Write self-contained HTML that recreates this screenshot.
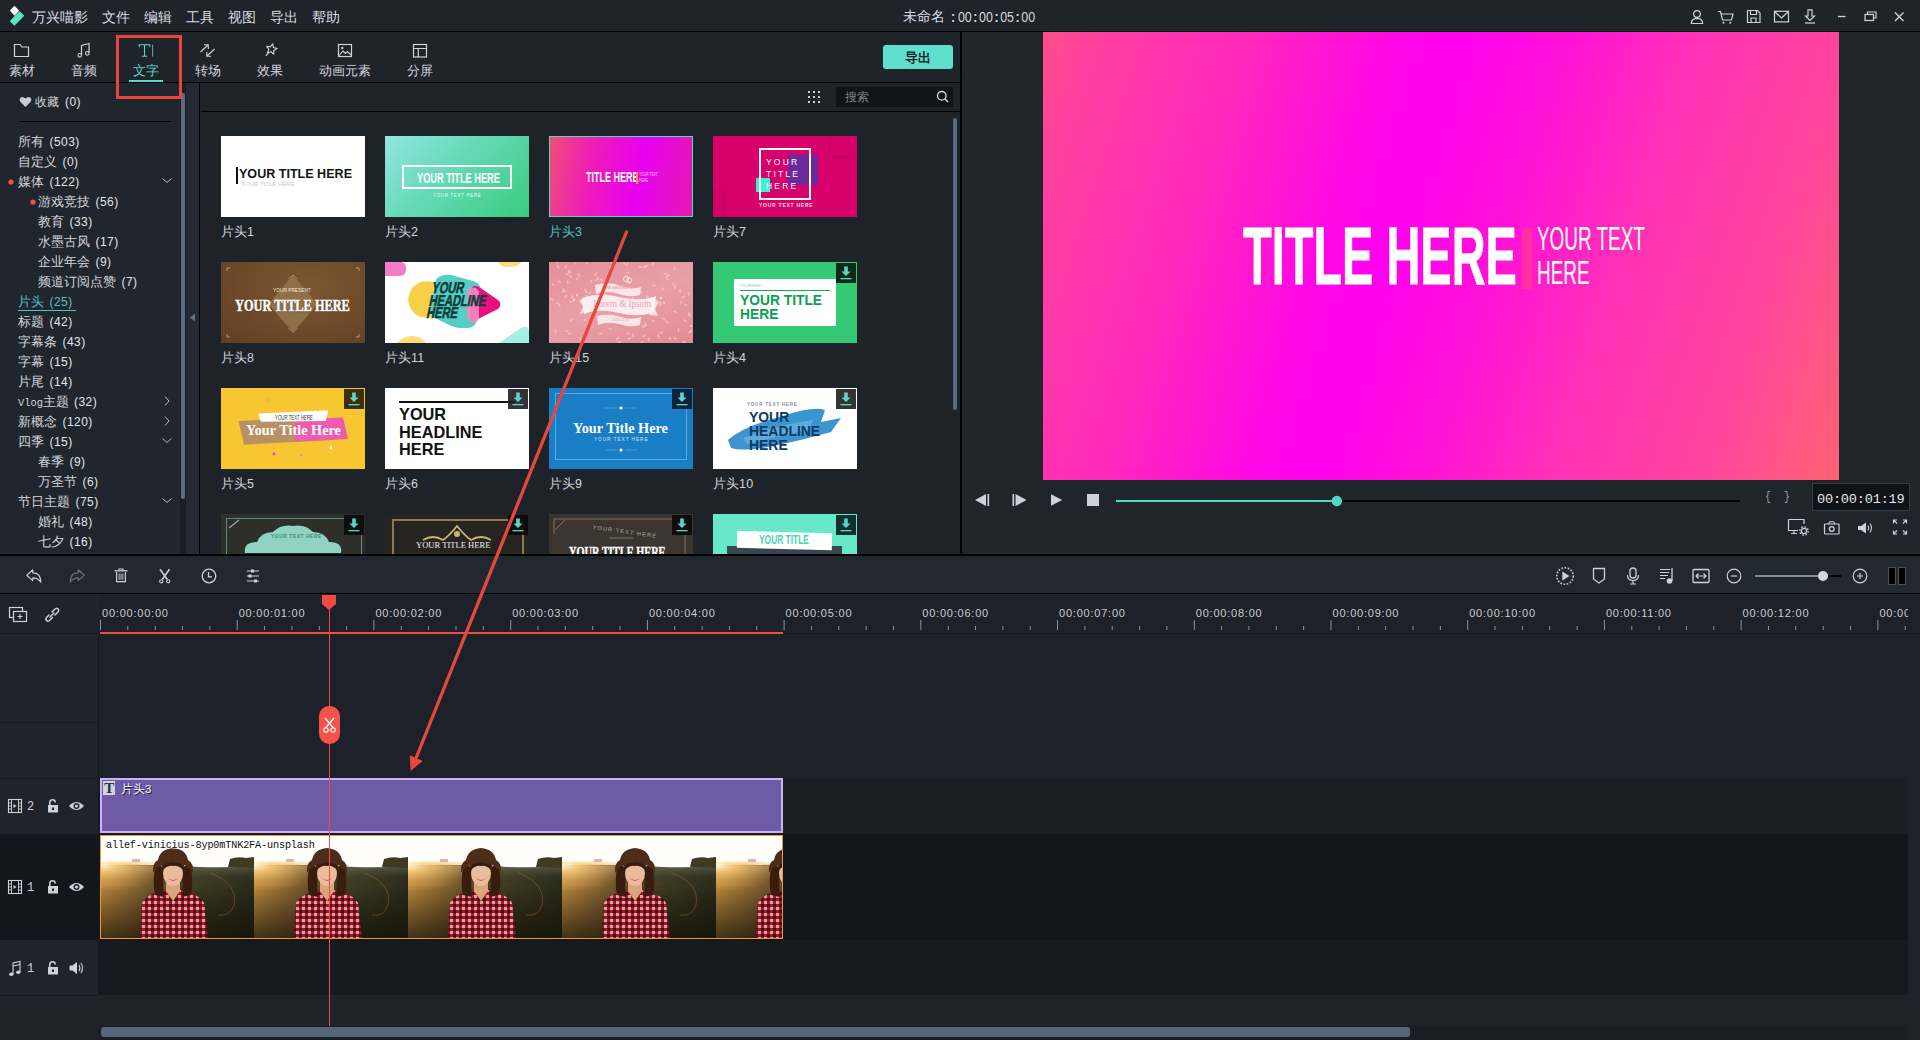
<!DOCTYPE html><html><head><meta charset="utf-8"><style>
*{margin:0;padding:0;box-sizing:border-box}
html,body{width:1920px;height:1040px;overflow:hidden;background:#1f232a;font-family:"Liberation Sans",sans-serif;color:#d4d8de}
.a{position:absolute}
.t{position:absolute;white-space:nowrap;line-height:1}
svg{position:absolute;overflow:visible}
.m{font-family:"Liberation Mono",monospace}
</style></head><body>
<div class="a" style="left:0px;top:0px;width:1920px;height:31px;background:#1f232a;"></div>
<div class="a" style="left:0px;top:31px;width:1920px;height:1px;background:#000;"></div>
<div class="a" style="left:0px;top:32px;width:961px;height:50px;background:#1f232a;"></div>
<div class="a" style="left:0px;top:82px;width:961px;height:1px;background:#000;"></div>
<div class="a" style="left:0px;top:83px;width:199px;height:471px;background:#20262d;"></div>
<div class="a" style="left:186px;top:83px;width:13px;height:471px;background:#232a33;"></div>
<div class="a" style="left:180px;top:83px;width:6px;height:471px;background:#1a1e23;"></div>
<div class="a" style="left:181px;top:93px;width:4px;height:406px;background:#5b6b82;border-radius:2px"></div>
<div class="a" style="left:199px;top:83px;width:1px;height:471px;background:#000;"></div>
<div class="a" style="left:200px;top:83px;width:761px;height:471px;background:#1e232a;"></div>
<div class="a" style="left:201px;top:111px;width:760px;height:1px;background:#000;"></div>
<div class="a" style="left:960px;top:32px;width:2px;height:522px;background:#000;"></div>
<div class="a" style="left:963px;top:32px;width:957px;height:522px;background:#20252c;"></div>
<div class="a" style="left:0px;top:554px;width:1920px;height:2px;background:#000;"></div>
<div class="a" style="left:0px;top:556px;width:1920px;height:37px;background:#222830;"></div>
<div class="a" style="left:0px;top:594px;width:1920px;height:446px;background:#1d2129;"></div>
<svg style="left:0px;top:0px;" width="40" height="31" viewBox="0 0 40 31"><path d="M14.5 5.8 L19.2 10.8 L14.5 15.7 L9.8 10.5Z" fill="#fff"/><path d="M19.7 11.3 L24.3 15.8 L14.5 25.8 L9.8 21.2 L14.5 15.9Z" fill="#55e5c2"/></svg>
<div class="t" style="left:32px;top:10px;font-size:14px;color:#d8dce2;">万兴喵影</div>
<div class="t" style="left:102px;top:10px;font-size:14px;color:#d8dce2;">文件</div>
<div class="t" style="left:144px;top:10px;font-size:14px;color:#d8dce2;">编辑</div>
<div class="t" style="left:186px;top:10px;font-size:14px;color:#d8dce2;">工具</div>
<div class="t" style="left:228px;top:10px;font-size:14px;color:#d8dce2;">视图</div>
<div class="t" style="left:270px;top:10px;font-size:14px;color:#d8dce2;">导出</div>
<div class="t" style="left:312px;top:10px;font-size:14px;color:#d8dce2;">帮助</div>
<div class="t" style="left:903px;top:10px;font-size:13.5px;color:#d8dce2;">未命名</div>
<div class="t" style="left:951px;top:9px;font-size:15.5px;color:#d4d8de;transform:scaleX(0.8);transform-origin:0 0"><span style="font-weight:bold;margin-right:3.5px">:</span>00<span style="margin:0 2px;font-weight:bold">:</span>00<span style="margin:0 2px;font-weight:bold">:</span>05<span style="margin:0 2px;font-weight:bold">:</span>00</div>
<svg style="left:1688px;top:8px;" width="18" height="18" viewBox="0 0 18 18"><circle cx="9" cy="6" r="3.3" fill="none" stroke="#d0d4da" stroke-width="1.2"/><path d="M3.3 15.5 Q3.5 10.5 9 10.3 Q14.5 10.5 14.7 15.5Z" fill="none" stroke="#d0d4da" stroke-width="1.2"/></svg>
<svg style="left:1716px;top:8px;" width="20" height="18" viewBox="0 0 20 18"><path d="M2 3.5 L4.5 3.5 L6.5 12 L15.5 12 L17 6 L5.3 6" fill="none" stroke="#d0d4da" stroke-width="1.2"/><circle cx="7.5" cy="14.8" r="1" fill="#d0d4da"/><circle cx="14.3" cy="14.8" r="1" fill="#d0d4da"/></svg>
<svg style="left:1745px;top:8px;" width="18" height="18" viewBox="0 0 18 18"><path d="M2.5 2.5 H12.5 L15 5 V14.5 H2.5Z" fill="none" stroke="#d0d4da" stroke-width="1.2"/><path d="M5.5 2.5 V6.5 H11.5 V2.5 M6 14.5 V10 H11 V14.5" fill="none" stroke="#d0d4da" stroke-width="1.2"/></svg>
<svg style="left:1772px;top:8px;" width="20" height="18" viewBox="0 0 20 18"><rect x="2.5" y="3.3" width="14" height="10.6" fill="none" stroke="#d0d4da" stroke-width="1.2"/><path d="M2.5 3.5 L9.5 10 L16.5 3.5" fill="none" stroke="#d0d4da" stroke-width="1.2"/></svg>
<svg style="left:1801px;top:8px;" width="18" height="18" viewBox="0 0 18 18"><path d="M7 1.8 H11 V8 H13.5 L9 12.5 L4.5 8 H7Z" fill="none" stroke="#d0d4da" stroke-width="1.2"/><path d="M4 15 H14" stroke="#d0d4da" stroke-width="1.2"/></svg>
<svg style="left:1836px;top:8px;" width="14" height="18" viewBox="0 0 14 18"><path d="M2 8.5 H9.5" stroke="#d0d4da" stroke-width="1.3"/></svg>
<svg style="left:1863px;top:8px;" width="16" height="18" viewBox="0 0 16 18"><rect x="2" y="6.5" width="8.5" height="6" fill="none" stroke="#d0d4da" stroke-width="1.2"/><path d="M4.5 6.5 V4 H13 V10 H10.5" fill="none" stroke="#d0d4da" stroke-width="1.2"/></svg>
<svg style="left:1892px;top:8px;" width="16" height="18" viewBox="0 0 16 18"><path d="M3 4.5 L11.5 13 M11.5 4.5 L3 13" stroke="#d0d4da" stroke-width="1.4"/></svg>
<div class="t" style="left:-38px;top:64px;width:120px;text-align:center;font-size:13px;color:#d0d4da">素材</div>
<div class="t" style="left:24px;top:64px;width:120px;text-align:center;font-size:13px;color:#d0d4da">音频</div>
<div class="t" style="left:86px;top:64px;width:120px;text-align:center;font-size:13px;color:#5ad8c8">文字</div>
<div class="t" style="left:148px;top:64px;width:120px;text-align:center;font-size:13px;color:#d0d4da">转场</div>
<div class="t" style="left:210px;top:64px;width:120px;text-align:center;font-size:13px;color:#d0d4da">效果</div>
<div class="t" style="left:285px;top:64px;width:120px;text-align:center;font-size:13px;color:#d0d4da">动画元素</div>
<div class="t" style="left:360px;top:64px;width:120px;text-align:center;font-size:13px;color:#d0d4da">分屏</div>
<svg style="left:12px;top:42px;" width="20" height="18" viewBox="0 0 20 18"><path d="M2.5 2.5 H8 L10 5 H16.5 V14.5 H2.5Z" fill="none" stroke="#d0d4da" stroke-width="1.2"/></svg>
<svg style="left:74px;top:42px;" width="20" height="18" viewBox="0 0 20 18"><path d="M7.5 13 V3.5 L15 1.5 V11" fill="none" stroke="#d0d4da" stroke-width="1.2"/><circle cx="5.8" cy="13.3" r="1.8" fill="none" stroke="#d0d4da" stroke-width="1.1"/><circle cx="13.3" cy="11.3" r="1.8" fill="none" stroke="#d0d4da" stroke-width="1.1"/></svg>
<svg style="left:136px;top:42px;" width="22" height="18" viewBox="0 0 22 18"><path d="M3.2 5 V2.8 H13.8 V5 M8.5 2.8 V14.3 M5.8 14.3 H11.2" fill="none" stroke="#5ad8c8" stroke-width="1.1"/><path d="M16.6 2.5 V14.5" stroke="#5ad8c8" stroke-width="0.8"/></svg>
<svg style="left:198px;top:43px;" width="22" height="18" viewBox="0 0 22 18"><path d="M2.5 9 L10 2 M6 1.8 H10.3 V6" fill="none" stroke="#d0d4da" stroke-width="1.1"/><path d="M16.5 6 L9 13 M13 13.3 H8.8 V9" fill="none" stroke="#d0d4da" stroke-width="1.1"/></svg>
<svg style="left:261px;top:42px;" width="20" height="18" viewBox="0 0 20 18"><path d="M10.50 1.60 L12.03 5.10 L15.83 5.47 L12.97 8.00 L13.79 11.73 L10.50 9.80 L7.21 11.73 L8.03 8.00 L5.17 5.47 L8.97 5.10Z" fill="none" stroke="#d0d4da" stroke-width="1.1" stroke-linejoin="round" transform="rotate(12 10.5 7.2)"/><path d="M7.6 10.8 L4.8 13.8" stroke="#d0d4da" stroke-width="1.2"/></svg>
<svg style="left:336px;top:42px;" width="20" height="18" viewBox="0 0 20 18"><rect x="2.5" y="2.5" width="13" height="12" fill="none" stroke="#d0d4da" stroke-width="1.2"/><path d="M3 13.5 L7 9 L9.5 11.5 L11.5 9.5 L15 13" fill="none" stroke="#d0d4da" stroke-width="1.1"/><circle cx="6.3" cy="6" r="1.2" fill="#d0d4da"/></svg>
<svg style="left:411px;top:42px;" width="20" height="18" viewBox="0 0 20 18"><rect x="2.5" y="2.5" width="13" height="12.5" fill="none" stroke="#d0d4da" stroke-width="1.2"/><path d="M2.5 6.5 H15.5 M7.3 6.5 V15" stroke="#d0d4da" stroke-width="1.2"/></svg>
<div class="a" style="left:116px;top:35px;width:66px;height:64px;background:transparent;border:3px solid #e9453c"></div>
<div class="a" style="left:129px;top:80px;width:34px;height:2px;background:#5ad8c8;"></div>
<div class="a" style="left:883px;top:45px;width:70px;height:24px;background:#5fe0cf;border-radius:3px"></div>
<div class="t" style="left:883px;top:51px;width:70px;text-align:center;font-size:13px;font-weight:bold;color:#1b2028">导出</div>
<svg style="left:19px;top:96px;" width="14" height="12" viewBox="0 0 14 12"><path d="M6.5 11 L1.3 5.8 Q-0.2 3.8 1.3 2 Q3.6 -0.2 6.5 2.6 Q9.4 -0.2 11.7 2 Q13.2 3.8 11.7 5.8Z" fill="#c8ccd3"/></svg>
<div class="t" style="left:35px;top:96px;font-size:12px;color:#d2d6dc">收藏<span style="font-family:'Liberation Sans',sans-serif;font-size:12px;letter-spacing:0.45px;margin-left:6px;color:#e2e5e8">(0)</span></div>
<div class="a" style="left:20px;top:121px;width:151px;height:1px;background:#000;"></div>
<div class="t" style="left:18px;top:136px;font-size:12.5px;color:#d2d6dc">所有<span style="font-family:'Liberation Sans',sans-serif;font-size:12px;letter-spacing:0.45px;margin-left:5.5px;color:#e2e5e8">(503)</span></div>
<div class="t" style="left:18px;top:156px;font-size:12.5px;color:#d2d6dc">自定义<span style="font-family:'Liberation Sans',sans-serif;font-size:12px;letter-spacing:0.45px;margin-left:5.5px;color:#e2e5e8">(0)</span></div>
<div class="t" style="left:18px;top:176px;font-size:12.5px;color:#d2d6dc">媒体<span style="font-family:'Liberation Sans',sans-serif;font-size:12px;letter-spacing:0.45px;margin-left:5.5px;color:#e2e5e8">(122)</span></div>
<div class="t" style="left:38px;top:196px;font-size:12.5px;color:#d2d6dc">游戏竞技<span style="font-family:'Liberation Sans',sans-serif;font-size:12px;letter-spacing:0.45px;margin-left:5.5px;color:#e2e5e8">(56)</span></div>
<div class="t" style="left:38px;top:216px;font-size:12.5px;color:#d2d6dc">教育<span style="font-family:'Liberation Sans',sans-serif;font-size:12px;letter-spacing:0.45px;margin-left:5.5px;color:#e2e5e8">(33)</span></div>
<div class="t" style="left:38px;top:236px;font-size:12.5px;color:#d2d6dc">水墨古风<span style="font-family:'Liberation Sans',sans-serif;font-size:12px;letter-spacing:0.45px;margin-left:5.5px;color:#e2e5e8">(17)</span></div>
<div class="t" style="left:38px;top:256px;font-size:12.5px;color:#d2d6dc">企业年会<span style="font-family:'Liberation Sans',sans-serif;font-size:12px;letter-spacing:0.45px;margin-left:5.5px;color:#e2e5e8">(9)</span></div>
<div class="t" style="left:38px;top:276px;font-size:12.5px;color:#d2d6dc">频道订阅点赞<span style="font-family:'Liberation Sans',sans-serif;font-size:12px;letter-spacing:0.45px;margin-left:5.5px;color:#e2e5e8">(7)</span></div>
<div class="t" style="left:18px;top:296px;font-size:12.5px;color:#4fc3c0">片头<span style="font-family:'Liberation Sans',sans-serif;font-size:12px;letter-spacing:0.45px;margin-left:5.5px;color:#4fc3c0">(25)</span></div>
<div class="t" style="left:18px;top:316px;font-size:12.5px;color:#d2d6dc">标题<span style="font-family:'Liberation Sans',sans-serif;font-size:12px;letter-spacing:0.45px;margin-left:5.5px;color:#e2e5e8">(42)</span></div>
<div class="t" style="left:18px;top:336px;font-size:12.5px;color:#d2d6dc">字幕条<span style="font-family:'Liberation Sans',sans-serif;font-size:12px;letter-spacing:0.45px;margin-left:5.5px;color:#e2e5e8">(43)</span></div>
<div class="t" style="left:18px;top:356px;font-size:12.5px;color:#d2d6dc">字幕<span style="font-family:'Liberation Sans',sans-serif;font-size:12px;letter-spacing:0.45px;margin-left:5.5px;color:#e2e5e8">(15)</span></div>
<div class="t" style="left:18px;top:376px;font-size:12.5px;color:#d2d6dc">片尾<span style="font-family:'Liberation Sans',sans-serif;font-size:12px;letter-spacing:0.45px;margin-left:5.5px;color:#e2e5e8">(14)</span></div>
<div class="t" style="left:18px;top:396px;font-size:12.5px;color:#d2d6dc"><span class="m" style="font-size:10.4px;">Vlog</span>主题<span style="font-family:'Liberation Sans',sans-serif;font-size:12px;letter-spacing:0.45px;margin-left:5px;color:#e2e5e8">(32)</span></div>
<div class="t" style="left:18px;top:416px;font-size:12.5px;color:#d2d6dc">新概念<span style="font-family:'Liberation Sans',sans-serif;font-size:12px;letter-spacing:0.45px;margin-left:5.5px;color:#e2e5e8">(120)</span></div>
<div class="t" style="left:18px;top:436px;font-size:12.5px;color:#d2d6dc">四季<span style="font-family:'Liberation Sans',sans-serif;font-size:12px;letter-spacing:0.45px;margin-left:5.5px;color:#e2e5e8">(15)</span></div>
<div class="t" style="left:38px;top:456px;font-size:12.5px;color:#d2d6dc">春季<span style="font-family:'Liberation Sans',sans-serif;font-size:12px;letter-spacing:0.45px;margin-left:5.5px;color:#e2e5e8">(9)</span></div>
<div class="t" style="left:38px;top:476px;font-size:12.5px;color:#d2d6dc">万圣节<span style="font-family:'Liberation Sans',sans-serif;font-size:12px;letter-spacing:0.45px;margin-left:5.5px;color:#e2e5e8">(6)</span></div>
<div class="t" style="left:18px;top:496px;font-size:12.5px;color:#d2d6dc">节日主题<span style="font-family:'Liberation Sans',sans-serif;font-size:12px;letter-spacing:0.45px;margin-left:5.5px;color:#e2e5e8">(75)</span></div>
<div class="t" style="left:38px;top:516px;font-size:12.5px;color:#d2d6dc">婚礼<span style="font-family:'Liberation Sans',sans-serif;font-size:12px;letter-spacing:0.45px;margin-left:5.5px;color:#e2e5e8">(48)</span></div>
<div class="t" style="left:38px;top:536px;font-size:12.5px;color:#d2d6dc">七夕<span style="font-family:'Liberation Sans',sans-serif;font-size:12px;letter-spacing:0.45px;margin-left:5.5px;color:#e2e5e8">(16)</span></div>
<div class="a" style="left:18px;top:310px;width:58px;height:1px;background:#4fc3c0;"></div>
<svg style="left:8px;top:179px;" width="6" height="6" viewBox="0 0 6 6"><circle cx="3" cy="3" r="2.6" fill="#f0534a"/></svg>
<svg style="left:30px;top:199px;" width="6" height="6" viewBox="0 0 6 6"><circle cx="3" cy="3" r="2.6" fill="#f0534a"/></svg>
<svg style="left:161px;top:177px;" width="12" height="8" viewBox="0 0 12 8"><path d="M1.5 1.5 L6 5.5 L10.5 1.5" fill="none" stroke="#b8bdc5" stroke-width="1"/></svg>
<svg style="left:163px;top:395px;" width="8" height="12" viewBox="0 0 8 12"><path d="M2 1.5 L6 6 L2 10.5" fill="none" stroke="#b8bdc5" stroke-width="1"/></svg>
<svg style="left:163px;top:415px;" width="8" height="12" viewBox="0 0 8 12"><path d="M2 1.5 L6 6 L2 10.5" fill="none" stroke="#b8bdc5" stroke-width="1"/></svg>
<svg style="left:161px;top:437px;" width="12" height="8" viewBox="0 0 12 8"><path d="M1.5 1.5 L6 5.5 L10.5 1.5" fill="none" stroke="#b8bdc5" stroke-width="1"/></svg>
<svg style="left:161px;top:497px;" width="12" height="8" viewBox="0 0 12 8"><path d="M1.5 1.5 L6 5.5 L10.5 1.5" fill="none" stroke="#b8bdc5" stroke-width="1"/></svg>
<svg style="left:189px;top:313px;" width="7" height="9" viewBox="0 0 7 9"><path d="M6 0.5 V8.5 L0.8 4.5Z" fill="#5f7088"/></svg>
<svg style="left:807px;top:90px;" width="14" height="14" viewBox="0 0 14 14"><rect x="1" y="1" width="2" height="2" fill="#c9ced5"/><rect x="1" y="6" width="2" height="2" fill="#c9ced5"/><rect x="1" y="11" width="2" height="2" fill="#c9ced5"/><rect x="6" y="1" width="2" height="2" fill="#c9ced5"/><rect x="6" y="6" width="2" height="2" fill="#c9ced5"/><rect x="6" y="11" width="2" height="2" fill="#c9ced5"/><rect x="11" y="1" width="2" height="2" fill="#c9ced5"/><rect x="11" y="6" width="2" height="2" fill="#c9ced5"/><rect x="11" y="11" width="2" height="2" fill="#c9ced5"/></svg>
<div class="a" style="left:836px;top:87px;width:117px;height:20px;background:#101317;"></div>
<div class="t" style="left:845px;top:91px;font-size:12px;color:#7d828a;">搜索</div>
<svg style="left:935px;top:89px;" width="16" height="16" viewBox="0 0 16 16"><circle cx="6.8" cy="6.8" r="4.3" fill="none" stroke="#d6dade" stroke-width="1.3"/><path d="M10 10 L13 13" stroke="#d6dade" stroke-width="1.5"/></svg>
<div class="a" style="left:953px;top:118px;width:4px;height:292px;background:#5a6a80;border-radius:2px"></div>
<div class="a" style="left:221px;top:136px;width:144px;height:81px;background:#fff;overflow:hidden;"><div class="a" style="left:15px;top:31px;width:2px;height:17px;background:#111"></div><div class="t" style="left:18px;top:31px;font-size:13.5px;color:#151515;font-weight:bold;font-family:'Liberation Sans',sans-serif;transform:scaleX(0.93);transform-origin:0 0;">YOUR TITLE HERE</div><div class="t" style="left:20px;top:45px;font-size:6px;color:#c8c8c8;font-weight:normal;font-family:'Liberation Sans',sans-serif;transform:scaleX(1.0);transform-origin:0 0;">YOUR TITLE HERE</div></div>
<div class="t" style="left:221px;top:225px;font-size:13px;color:#cfd3d9">片头<span style="font-family:'Liberation Sans',sans-serif;font-size:12.5px;letter-spacing:0.3px">1</span></div>
<div class="a" style="left:385px;top:136px;width:144px;height:81px;background:linear-gradient(135deg,#93e6e2 0%,#64d9b6 45%,#38cc7c 100%);overflow:hidden;"><div class="a" style="left:17px;top:29px;width:110px;height:24px;border:2px solid #fff"></div><div class="t" style="left:31.5px;top:34px;font-size:15px;color:#fff;font-weight:bold;font-family:'Liberation Sans',sans-serif;transform:scaleX(0.614);transform-origin:0 0;">YOUR TITLE HERE</div><div class="t" style="left:47.5px;top:57px;font-size:5.5px;color:#e8fff4;font-weight:normal;font-family:'Liberation Sans',sans-serif;transform:scaleX(0.78);transform-origin:0 0;letter-spacing:1px">YOUR TEXT HERE</div></div>
<div class="t" style="left:385px;top:225px;font-size:13px;color:#cfd3d9">片头<span style="font-family:'Liberation Sans',sans-serif;font-size:12.5px;letter-spacing:0.3px">2</span></div>
<div class="a" style="left:549px;top:136px;width:144px;height:81px;background:linear-gradient(100deg,#f04e78 0%,#ee1cb8 30%,#e800f0 62%,#e51ab0 100%);overflow:hidden;border:1px solid #4fd8c8"><div class="t" style="left:36px;top:33px;font-size:14.5px;color:#fff;font-weight:bold;font-family:'Liberation Sans',sans-serif;transform:scaleX(0.62);transform-origin:0 0;">TITLE HERE</div><div class="a" style="left:86px;top:35px;width:2px;height:12px;background:#f0a020"></div><div class="t" style="left:89px;top:34px;font-size:5.5px;color:#fbd0f5;font-weight:normal;font-family:'Liberation Sans',sans-serif;transform:scaleX(0.6);transform-origin:0 0;line-height:6px">YOUR TEXT<br>HERE</div></div>
<div class="t" style="left:549px;top:225px;font-size:13px;color:#4fc3c0">片头<span style="font-family:'Liberation Sans',sans-serif;font-size:12.5px;letter-spacing:0.3px">3</span></div>
<div class="a" style="left:713px;top:136px;width:144px;height:81px;background:#d8006a;overflow:hidden;"><div class="a" style="left:0;top:0;width:144px;height:81px;background:#d8006a"></div><div class="a" style="left:117px;top:0;width:27px;height:20px;background:#d4006a;box-shadow:-1px 2px 3px rgba(0,0,0,0.12)"></div><div class="a" style="left:0;top:55px;width:11px;height:26px;background:#d4006a;box-shadow:2px -1px 3px rgba(0,0,0,0.12)"></div><div class="a" style="left:75px;top:19px;width:30px;height:30px;background:#6a2a9e"></div><div class="a" style="left:43px;top:42px;width:14px;height:14px;background:#40f0d4"></div><div class="a" style="left:46px;top:12px;width:52px;height:52px;border:2px solid #fff"></div><div class="t" style="left:53px;top:20px;font-size:8.5px;color:#fff;font-weight:normal;font-family:'Liberation Sans',sans-serif;transform:scaleX(1.0);transform-origin:0 0;line-height:12px;letter-spacing:2.2px">YOUR<br>TITLE<br>HERE</div><div class="t" style="left:46px;top:67px;font-size:5px;color:#ffd8ea;font-weight:bold;font-family:'Liberation Sans',sans-serif;transform:scaleX(1.0);transform-origin:0 0;letter-spacing:0.75px">YOUR TEXT HERE</div></div>
<div class="t" style="left:713px;top:225px;font-size:13px;color:#cfd3d9">片头<span style="font-family:'Liberation Sans',sans-serif;font-size:12.5px;letter-spacing:0.3px">7</span></div>
<div class="a" style="left:221px;top:262px;width:144px;height:81px;background:radial-gradient(ellipse at 60% 30%,#7c5632 0%,#6e4a2a 55%,#5e3e22 100%);overflow:hidden;"><svg style="left:0;top:0" width="144" height="81"><path d="M72 13 L96.5 42 L72 70.5 L47.5 42Z" fill="#8f7049"/><path d="M67 17 L72 13 L77 17 M67 66 L72 70.5 L77 66" fill="none" stroke="#b09470" stroke-width="0.7"/></svg><svg style="left:0;top:0" width="144" height="81"><path d="M6 9 V6 H9 M138 9 V6 H135 M6 72 V75 H9 M138 72 V75 H135" fill="none" stroke="#b39a78" stroke-width="1"/></svg><div class="t" style="left:52px;top:25px;font-size:6px;color:#f0e6d8;font-weight:normal;font-family:'Liberation Sans',sans-serif;transform:scaleX(0.8);transform-origin:0 0;">YOUR PRESENT</div><div class="t" style="left:14px;top:36px;font-size:16px;color:#fff;font-weight:bold;font-family:'Liberation Serif',serif;transform:scaleX(0.77);transform-origin:0 0;text-shadow:0 1px 1px rgba(40,20,0,0.6);-webkit-text-stroke:0.5px #fff">YOUR TITLE HERE</div></div>
<div class="t" style="left:221px;top:351px;font-size:13px;color:#cfd3d9">片头<span style="font-family:'Liberation Sans',sans-serif;font-size:12.5px;letter-spacing:0.3px">8</span></div>
<div class="a" style="left:385px;top:262px;width:144px;height:81px;background:#fff;overflow:hidden;"><svg style="left:0;top:0" width="144" height="81"><path d="M0 0 H17 Q22 2 21 9 Q20 14 14 14 H0Z" fill="#f27cc8"/><path d="M113 0 H136 Q134 5 124 5 Q114 5 113 0Z" fill="#fbdc78"/><path d="M12 81 Q18 74 27 74 Q36 74 41 81Z" fill="#fbdc78"/><circle cx="41.6" cy="37.5" r="18.3" fill="#f8cf48"/><path d="M56 14 Q60 12 66 13 L88 19 Q95 21 96 28 L92 58 Q90 66 82 66 L76 66 Q70 66 62 62 L50 56 Q45 53 46 47 L50 20 Q52 15 56 14Z" fill="#4fcdbf" opacity="0.96"/><path d="M86 27 Q88 22 94 25 L113 38 Q118 42 113 47 L91 58 Q85 61 85 55Z" fill="#e8107c"/><path d="M85 26 Q92 24 94 30 L94 56 Q92 62 86 60 Q82 58 82 52 L82 31 Q82 26 85 26Z" fill="#f28ac2" opacity="0.9"/><path d="M114 81 L136 66 Q144 62 144 70 V81Z" fill="#a6efe4"/></svg><div class="t" style="left:45px;top:19.5px;font-size:15.5px;color:#0a3c3e;font-weight:bold;font-family:'Liberation Sans',sans-serif;transform:scaleX(0.7);transform-origin:0 0;line-height:12.7px;-webkit-text-stroke:0.6px #0a3c3e;letter-spacing:-0.1px;transform:scaleX(0.72) skewX(-16deg);transform-origin:0 45%">YOUR<br>HEADLINE<br>HERE</div></div>
<div class="t" style="left:385px;top:351px;font-size:13px;color:#cfd3d9">片头<span style="font-family:'Liberation Sans',sans-serif;font-size:12.5px;letter-spacing:0.3px">11</span></div>
<div class="a" style="left:549px;top:262px;width:144px;height:81px;background:linear-gradient(160deg,#e58e98,#e9a0a8 50%,#e48a94);overflow:hidden;"><svg style="left:0;top:0" width="144" height="81"><ellipse cx="46.6" cy="12.2" rx="2" ry="0.9" transform="rotate(117 46.6 12.2)" fill="#f8c8cc" opacity="0.75"/><ellipse cx="10.4" cy="43.4" rx="2" ry="0.9" transform="rotate(66 10.4 43.4)" fill="#f8c8cc" opacity="0.75"/><ellipse cx="8.4" cy="41.1" rx="2" ry="0.9" transform="rotate(7 8.4 41.1)" fill="#f8c8cc" opacity="0.75"/><ellipse cx="62.4" cy="5.7" rx="2" ry="0.9" transform="rotate(16 62.4 5.7)" fill="#f8c8cc" opacity="0.75"/><ellipse cx="61.1" cy="67.0" rx="2" ry="0.9" transform="rotate(22 61.1 67.0)" fill="#f8c8cc" opacity="0.75"/><ellipse cx="32.1" cy="50.8" rx="2" ry="0.9" transform="rotate(171 32.1 50.8)" fill="#f8c8cc" opacity="0.75"/><ellipse cx="83.1" cy="32.1" rx="2" ry="0.9" transform="rotate(176 83.1 32.1)" fill="#f8c8cc" opacity="0.75"/><ellipse cx="6.7" cy="69.5" rx="2" ry="0.9" transform="rotate(52 6.7 69.5)" fill="#f8c8cc" opacity="0.75"/><ellipse cx="20.8" cy="9.5" rx="2" ry="0.9" transform="rotate(56 20.8 9.5)" fill="#f8c8cc" opacity="0.75"/><ellipse cx="117.5" cy="14.6" rx="2" ry="0.9" transform="rotate(105 117.5 14.6)" fill="#f8c8cc" opacity="0.75"/><ellipse cx="92.0" cy="30.2" rx="2" ry="0.9" transform="rotate(99 92.0 30.2)" fill="#f8c8cc" opacity="0.75"/><ellipse cx="9.0" cy="4.8" rx="2" ry="0.9" transform="rotate(37 9.0 4.8)" fill="#f8c8cc" opacity="0.75"/><ellipse cx="98.0" cy="34.6" rx="2" ry="0.9" transform="rotate(57 98.0 34.6)" fill="#f8c8cc" opacity="0.75"/><ellipse cx="84.3" cy="36.7" rx="2" ry="0.9" transform="rotate(54 84.3 36.7)" fill="#f8c8cc" opacity="0.75"/><ellipse cx="114.4" cy="56.6" rx="2" ry="0.9" transform="rotate(44 114.4 56.6)" fill="#f8c8cc" opacity="0.75"/><ellipse cx="82.7" cy="42.5" rx="2" ry="0.9" transform="rotate(158 82.7 42.5)" fill="#f8c8cc" opacity="0.75"/><ellipse cx="105.0" cy="23.3" rx="2" ry="0.9" transform="rotate(176 105.0 23.3)" fill="#f8c8cc" opacity="0.75"/><ellipse cx="17.0" cy="33.9" rx="2" ry="0.9" transform="rotate(136 17.0 33.9)" fill="#f8c8cc" opacity="0.75"/><ellipse cx="21.9" cy="39.6" rx="2" ry="0.9" transform="rotate(7 21.9 39.6)" fill="#f8c8cc" opacity="0.75"/><ellipse cx="96.2" cy="61.9" rx="2" ry="0.9" transform="rotate(103 96.2 61.9)" fill="#f8c8cc" opacity="0.75"/><ellipse cx="126.1" cy="25.4" rx="2" ry="0.9" transform="rotate(125 126.1 25.4)" fill="#f8c8cc" opacity="0.75"/><ellipse cx="85.6" cy="47.0" rx="2" ry="0.9" transform="rotate(82 85.6 47.0)" fill="#f8c8cc" opacity="0.75"/><ellipse cx="121.0" cy="76.5" rx="2" ry="0.9" transform="rotate(85 121.0 76.5)" fill="#f8c8cc" opacity="0.75"/><ellipse cx="95.6" cy="4.9" rx="2" ry="0.9" transform="rotate(126 95.6 4.9)" fill="#f8c8cc" opacity="0.75"/><ellipse cx="93.2" cy="80.4" rx="2" ry="0.9" transform="rotate(148 93.2 80.4)" fill="#f8c8cc" opacity="0.75"/><ellipse cx="41.0" cy="31.2" rx="2" ry="0.9" transform="rotate(120 41.0 31.2)" fill="#f8c8cc" opacity="0.75"/><ellipse cx="3.2" cy="37.4" rx="2" ry="0.9" transform="rotate(30 3.2 37.4)" fill="#f8c8cc" opacity="0.75"/><ellipse cx="16.9" cy="4.8" rx="2" ry="0.9" transform="rotate(138 16.9 4.8)" fill="#f8c8cc" opacity="0.75"/><ellipse cx="18.6" cy="20.1" rx="2" ry="0.9" transform="rotate(70 18.6 20.1)" fill="#f8c8cc" opacity="0.75"/><ellipse cx="125.5" cy="6.5" rx="2" ry="0.9" transform="rotate(81 125.5 6.5)" fill="#f8c8cc" opacity="0.75"/><ellipse cx="79.1" cy="71.6" rx="2" ry="0.9" transform="rotate(147 79.1 71.6)" fill="#f8c8cc" opacity="0.75"/><ellipse cx="124.4" cy="22.6" rx="2" ry="0.9" transform="rotate(75 124.4 22.6)" fill="#f8c8cc" opacity="0.75"/><ellipse cx="51.7" cy="71.6" rx="2" ry="0.9" transform="rotate(172 51.7 71.6)" fill="#f8c8cc" opacity="0.75"/><ellipse cx="21.7" cy="14.3" rx="2" ry="0.9" transform="rotate(42 21.7 14.3)" fill="#f8c8cc" opacity="0.75"/><ellipse cx="33.6" cy="39.3" rx="2" ry="0.9" transform="rotate(106 33.6 39.3)" fill="#f8c8cc" opacity="0.75"/><ellipse cx="37.8" cy="0.3" rx="2" ry="0.9" transform="rotate(75 37.8 0.3)" fill="#f8c8cc" opacity="0.75"/><ellipse cx="53.2" cy="45.9" rx="2" ry="0.9" transform="rotate(172 53.2 45.9)" fill="#f8c8cc" opacity="0.75"/><ellipse cx="99.4" cy="41.8" rx="2" ry="0.9" transform="rotate(111 99.4 41.8)" fill="#f8c8cc" opacity="0.75"/><ellipse cx="97.4" cy="4.4" rx="2" ry="0.9" transform="rotate(162 97.4 4.4)" fill="#f8c8cc" opacity="0.75"/><ellipse cx="112.3" cy="70.8" rx="2" ry="0.9" transform="rotate(144 112.3 70.8)" fill="#f8c8cc" opacity="0.75"/><ellipse cx="56.5" cy="32.3" rx="2" ry="0.9" transform="rotate(19 56.5 32.3)" fill="#f8c8cc" opacity="0.75"/><ellipse cx="91.3" cy="5.0" rx="2" ry="0.9" transform="rotate(12 91.3 5.0)" fill="#f8c8cc" opacity="0.75"/><ellipse cx="30.1" cy="13.1" rx="2" ry="0.9" transform="rotate(61 30.1 13.1)" fill="#f8c8cc" opacity="0.75"/><ellipse cx="7.6" cy="0.0" rx="2" ry="0.9" transform="rotate(27 7.6 0.0)" fill="#f8c8cc" opacity="0.75"/><ellipse cx="14.6" cy="29.5" rx="2" ry="0.9" transform="rotate(5 14.6 29.5)" fill="#f8c8cc" opacity="0.75"/><ellipse cx="125.9" cy="49.7" rx="2" ry="0.9" transform="rotate(27 125.9 49.7)" fill="#f8c8cc" opacity="0.75"/><ellipse cx="36.3" cy="28.1" rx="2" ry="0.9" transform="rotate(66 36.3 28.1)" fill="#f8c8cc" opacity="0.75"/><ellipse cx="17.7" cy="68.8" rx="2" ry="0.9" transform="rotate(179 17.7 68.8)" fill="#f8c8cc" opacity="0.75"/><ellipse cx="67.1" cy="39.2" rx="2" ry="0.9" transform="rotate(15 67.1 39.2)" fill="#f8c8cc" opacity="0.75"/><ellipse cx="14.7" cy="27.8" rx="2" ry="0.9" transform="rotate(48 14.7 27.8)" fill="#f8c8cc" opacity="0.75"/><ellipse cx="119.4" cy="13.1" rx="2" ry="0.9" transform="rotate(4 119.4 13.1)" fill="#f8c8cc" opacity="0.75"/><ellipse cx="136.9" cy="42.8" rx="2" ry="0.9" transform="rotate(26 136.9 42.8)" fill="#f8c8cc" opacity="0.75"/><ellipse cx="78.2" cy="2.2" rx="2" ry="0.9" transform="rotate(95 78.2 2.2)" fill="#f8c8cc" opacity="0.75"/><ellipse cx="140.9" cy="69.9" rx="2" ry="0.9" transform="rotate(125 140.9 69.9)" fill="#f8c8cc" opacity="0.75"/><ellipse cx="37.6" cy="29.7" rx="2" ry="0.9" transform="rotate(30 37.6 29.7)" fill="#f8c8cc" opacity="0.75"/><ellipse cx="111.2" cy="43.1" rx="2" ry="0.9" transform="rotate(140 111.2 43.1)" fill="#f8c8cc" opacity="0.75"/><ellipse cx="47.5" cy="18.1" rx="2" ry="0.9" transform="rotate(146 47.5 18.1)" fill="#f8c8cc" opacity="0.75"/><ellipse cx="141.8" cy="69.1" rx="2" ry="0.9" transform="rotate(145 141.8 69.1)" fill="#f8c8cc" opacity="0.75"/><ellipse cx="117.8" cy="59.9" rx="2" ry="0.9" transform="rotate(41 117.8 59.9)" fill="#f8c8cc" opacity="0.75"/><ellipse cx="74.5" cy="28.8" rx="2" ry="0.9" transform="rotate(5 74.5 28.8)" fill="#f8c8cc" opacity="0.75"/><ellipse cx="4.0" cy="22.6" rx="2" ry="0.9" transform="rotate(47 4.0 22.6)" fill="#f8c8cc" opacity="0.75"/><ellipse cx="99.7" cy="77.5" rx="2" ry="0.9" transform="rotate(81 99.7 77.5)" fill="#f8c8cc" opacity="0.75"/><ellipse cx="134.9" cy="80.0" rx="2" ry="0.9" transform="rotate(172 134.9 80.0)" fill="#f8c8cc" opacity="0.75"/><ellipse cx="52.5" cy="17.9" rx="2" ry="0.9" transform="rotate(41 52.5 17.9)" fill="#f8c8cc" opacity="0.75"/><ellipse cx="28.3" cy="16.6" rx="2" ry="0.9" transform="rotate(112 28.3 16.6)" fill="#f8c8cc" opacity="0.75"/><ellipse cx="129.6" cy="68.1" rx="2" ry="0.9" transform="rotate(86 129.6 68.1)" fill="#f8c8cc" opacity="0.75"/><ellipse cx="94.0" cy="64.8" rx="2" ry="0.9" transform="rotate(15 94.0 64.8)" fill="#f8c8cc" opacity="0.75"/><ellipse cx="95.1" cy="73.7" rx="2" ry="0.9" transform="rotate(141 95.1 73.7)" fill="#f8c8cc" opacity="0.75"/><ellipse cx="108.0" cy="38.7" rx="2" ry="0.9" transform="rotate(32 108.0 38.7)" fill="#f8c8cc" opacity="0.75"/><ellipse cx="113.6" cy="26.9" rx="2" ry="0.9" transform="rotate(144 113.6 26.9)" fill="#f8c8cc" opacity="0.75"/><ellipse cx="139.9" cy="32.1" rx="2" ry="0.9" transform="rotate(72 139.9 32.1)" fill="#f8c8cc" opacity="0.75"/><ellipse cx="136.3" cy="58.7" rx="2" ry="0.9" transform="rotate(31 136.3 58.7)" fill="#f8c8cc" opacity="0.75"/><ellipse cx="18.3" cy="12.2" rx="2" ry="0.9" transform="rotate(163 18.3 12.2)" fill="#f8c8cc" opacity="0.75"/><ellipse cx="116.1" cy="11.8" rx="2" ry="0.9" transform="rotate(149 116.1 11.8)" fill="#f8c8cc" opacity="0.75"/><ellipse cx="141.2" cy="53.2" rx="2" ry="0.9" transform="rotate(63 141.2 53.2)" fill="#f8c8cc" opacity="0.75"/><ellipse cx="79.0" cy="10.6" rx="2" ry="0.9" transform="rotate(3 79.0 10.6)" fill="#f8c8cc" opacity="0.75"/><ellipse cx="139.8" cy="52.6" rx="2" ry="0.9" transform="rotate(95 139.8 52.6)" fill="#f8c8cc" opacity="0.75"/><ellipse cx="134.4" cy="35.1" rx="2" ry="0.9" transform="rotate(157 134.4 35.1)" fill="#f8c8cc" opacity="0.75"/><ellipse cx="119.0" cy="17.1" rx="2" ry="0.9" transform="rotate(45 119.0 17.1)" fill="#f8c8cc" opacity="0.75"/><ellipse cx="42.2" cy="19.5" rx="2" ry="0.9" transform="rotate(106 42.2 19.5)" fill="#f8c8cc" opacity="0.75"/><ellipse cx="37.3" cy="33.9" rx="2" ry="0.9" transform="rotate(24 37.3 33.9)" fill="#f8c8cc" opacity="0.75"/><ellipse cx="131.0" cy="28.7" rx="2" ry="0.9" transform="rotate(82 131.0 28.7)" fill="#f8c8cc" opacity="0.75"/><ellipse cx="84.0" cy="73.2" rx="2" ry="0.9" transform="rotate(76 84.0 73.2)" fill="#f8c8cc" opacity="0.75"/><ellipse cx="132.2" cy="40.6" rx="2" ry="0.9" transform="rotate(96 132.2 40.6)" fill="#f8c8cc" opacity="0.75"/><ellipse cx="75.4" cy="1.5" rx="2" ry="0.9" transform="rotate(79 75.4 1.5)" fill="#f8c8cc" opacity="0.75"/><ellipse cx="26.4" cy="0.3" rx="2" ry="0.9" transform="rotate(144 26.4 0.3)" fill="#f8c8cc" opacity="0.75"/><ellipse cx="24.8" cy="38.4" rx="2" ry="0.9" transform="rotate(131 24.8 38.4)" fill="#f8c8cc" opacity="0.75"/><ellipse cx="80.1" cy="26.4" rx="2" ry="0.9" transform="rotate(93 80.1 26.4)" fill="#f8c8cc" opacity="0.75"/><ellipse cx="80.0" cy="63.5" rx="2" ry="0.9" transform="rotate(19 80.0 63.5)" fill="#f8c8cc" opacity="0.75"/><ellipse cx="80.7" cy="20.1" rx="2" ry="0.9" transform="rotate(50 80.7 20.1)" fill="#f8c8cc" opacity="0.75"/><ellipse cx="111.2" cy="41.1" rx="2" ry="0.9" transform="rotate(101 111.2 41.1)" fill="#f8c8cc" opacity="0.75"/><ellipse cx="109.4" cy="73.9" rx="2" ry="0.9" transform="rotate(80 109.4 73.9)" fill="#f8c8cc" opacity="0.75"/><ellipse cx="88.2" cy="40.9" rx="2" ry="0.9" transform="rotate(92 88.2 40.9)" fill="#f8c8cc" opacity="0.75"/><ellipse cx="99.8" cy="36.6" rx="2" ry="0.9" transform="rotate(96 99.8 36.6)" fill="#f8c8cc" opacity="0.75"/><ellipse cx="68.8" cy="76.3" rx="2" ry="0.9" transform="rotate(126 68.8 76.3)" fill="#f8c8cc" opacity="0.75"/><ellipse cx="126.2" cy="76.3" rx="2" ry="0.9" transform="rotate(47 126.2 76.3)" fill="#f8c8cc" opacity="0.75"/><ellipse cx="80.6" cy="76.4" rx="2" ry="0.9" transform="rotate(151 80.6 76.4)" fill="#f8c8cc" opacity="0.75"/><ellipse cx="19.7" cy="9.9" rx="2" ry="0.9" transform="rotate(80 19.7 9.9)" fill="#f8c8cc" opacity="0.75"/><ellipse cx="10.4" cy="19.5" rx="2" ry="0.9" transform="rotate(13 10.4 19.5)" fill="#f8c8cc" opacity="0.75"/><ellipse cx="96.4" cy="63.5" rx="2" ry="0.9" transform="rotate(161 96.4 63.5)" fill="#f8c8cc" opacity="0.75"/><ellipse cx="22.2" cy="58.0" rx="2" ry="0.9" transform="rotate(119 22.2 58.0)" fill="#f8c8cc" opacity="0.75"/><ellipse cx="20.6" cy="71.5" rx="2" ry="0.9" transform="rotate(174 20.6 71.5)" fill="#f8c8cc" opacity="0.75"/><ellipse cx="31.6" cy="77.2" rx="2" ry="0.9" transform="rotate(72 31.6 77.2)" fill="#f8c8cc" opacity="0.75"/><ellipse cx="70.2" cy="80.2" rx="2" ry="0.9" transform="rotate(150 70.2 80.2)" fill="#f8c8cc" opacity="0.75"/><ellipse cx="23.3" cy="35.0" rx="2" ry="0.9" transform="rotate(93 23.3 35.0)" fill="#f8c8cc" opacity="0.75"/><ellipse cx="48.8" cy="15.9" rx="2" ry="0.9" transform="rotate(57 48.8 15.9)" fill="#f8c8cc" opacity="0.75"/><ellipse cx="104.0" cy="1.6" rx="2" ry="0.9" transform="rotate(100 104.0 1.6)" fill="#f8c8cc" opacity="0.75"/><ellipse cx="63.4" cy="1.5" rx="2" ry="0.9" transform="rotate(60 63.4 1.5)" fill="#f8c8cc" opacity="0.75"/><ellipse cx="89.8" cy="41.5" rx="2" ry="0.9" transform="rotate(12 89.8 41.5)" fill="#f8c8cc" opacity="0.75"/><ellipse cx="141.9" cy="63.9" rx="2" ry="0.9" transform="rotate(175 141.9 63.9)" fill="#f8c8cc" opacity="0.75"/><path d="M30 38 L38 36 L36 44 L40 50 L31 52 L34 45Z" fill="#f8e4e6" opacity="0.9"/><path d="M101 38 L110 40 L106 47 L109 54 L100 53 L103 46Z" fill="#f8e4e6" opacity="0.9"/><path d="M33 36 Q50 30 70 35 Q92 40 107 34 L105 50 Q90 56 70 51 Q50 46 35 52Z" fill="#fdf2f3" opacity="0.95"/><path d="M46 23 Q60 19 72 24 Q84 28 92 25 L91 33 Q82 36 70 32 Q58 28 47 32Z" fill="#fbeaec" opacity="0.95"/><path d="M48 54 Q60 51 72 55 Q84 58 92 55 L91 63 Q82 66 70 62 Q58 59 49 63Z" fill="#fbeaec" opacity="0.95"/><circle cx="77" cy="17" r="2.6" fill="none" stroke="#fbeaec" stroke-width="0.9"/><circle cx="80" cy="18.5" r="2.6" fill="none" stroke="#fbeaec" stroke-width="0.9"/><circle cx="28" cy="33" r="0.9" fill="#fff"/><circle cx="25" cy="38" r="0.8" fill="#fff"/><circle cx="112" cy="36" r="0.9" fill="#fff"/><circle cx="115" cy="41" r="0.8" fill="#fff"/><circle cx="104" cy="59" r="0.8" fill="#fff"/><circle cx="36" cy="58" r="0.8" fill="#fff"/></svg><div class="t" style="left:44px;top:37.5px;font-size:9.5px;color:#e9a2ac;font-weight:normal;font-family:'Liberation Serif',serif;transform:scaleX(0.95);transform-origin:0 0;">Lorem &amp; Ipsum</div><div class="t" style="left:55px;top:25px;font-size:3.5px;color:#e9a2ac;font-weight:bold;font-family:'Liberation Sans',sans-serif;transform:scaleX(1.0);transform-origin:0 0;">THE WEDDING OF</div><div class="t" style="left:63px;top:57px;font-size:3.5px;color:#e9a2ac;font-weight:normal;font-family:'Liberation Sans',sans-serif;transform:scaleX(1.0);transform-origin:0 0;">2020.01.30</div></div>
<div class="t" style="left:549px;top:351px;font-size:13px;color:#cfd3d9">片头<span style="font-family:'Liberation Sans',sans-serif;font-size:12.5px;letter-spacing:0.3px">15</span></div>
<div class="a" style="left:713px;top:262px;width:144px;height:81px;background:#34c975;overflow:hidden;"><div class="a" style="left:21px;top:17px;width:102px;height:47px;background:#fff"></div><div class="a" style="left:27px;top:28px;width:90px;height:1.3px;background:#1aa85a"></div><div class="t" style="left:27px;top:23px;font-size:3px;color:#7fcfa0;font-weight:normal;font-family:'Liberation Sans',sans-serif;transform:scaleX(1.0);transform-origin:0 0;">YOU PRESENT</div><div class="t" style="left:26.5px;top:30.5px;font-size:15px;color:#0f9e56;font-weight:bold;font-family:'Liberation Sans',sans-serif;transform:scaleX(0.92);transform-origin:0 0;line-height:14.25px">YOUR TITLE<br>HERE</div></div>
<div class="a" style="left:836px;top:263px;width:20px;height:20px;background:rgba(8,28,18,0.92)"></div>
<svg style="left:836px;top:263px;" width="20" height="20" viewBox="0 0 20 20"><path d="M8.2 3.5 H11.8 V8.5 H14.5 L10 13 L5.5 8.5 H8.2Z" fill="#5fd3c6"/><rect x="4.5" y="15" width="11" height="1.3" fill="#5fd3c6"/></svg>
<div class="t" style="left:713px;top:351px;font-size:13px;color:#cfd3d9">片头<span style="font-family:'Liberation Sans',sans-serif;font-size:12.5px;letter-spacing:0.3px">4</span></div>
<div class="a" style="left:221px;top:388px;width:144px;height:81px;background:#f8c630;overflow:hidden;"><svg style="left:0;top:0" width="144" height="81"><path d="M17.5 33 L105 29 L113 52 L23 56.5Z" fill="#b89064"/><path d="M74 31.5 L122 29.5 L127 51 L74 53.5Z" fill="#f05bb2"/><path d="M37.3 25.5 L107.3 22.2 L104.8 33 L39.8 33.8Z" fill="#fff"/><circle cx="47" cy="12" r="2" fill="none" stroke="#e8b030" stroke-width="0.8"/><circle cx="53" cy="66" r="1.4" fill="#e040c0"/><circle cx="80" cy="67" r="1" fill="#a090b0"/><path d="M108 60 L111 57 L111 62Z" fill="#fff"/></svg><div class="t" style="left:54px;top:25.5px;font-size:7px;color:#333;font-weight:normal;font-family:'Liberation Sans',sans-serif;transform:scaleX(0.62);transform-origin:0 0;">YOUR TEXT HERE</div><div class="t" style="left:24.5px;top:35.5px;font-size:14px;color:#fff;font-weight:bold;font-family:'Liberation Serif',serif;transform:scaleX(1.02);transform-origin:0 0;">Your Title Here</div></div>
<div class="a" style="left:344px;top:389px;width:20px;height:20px;background:rgba(40,30,10,0.9)"></div>
<svg style="left:344px;top:389px;" width="20" height="20" viewBox="0 0 20 20"><path d="M8.2 3.5 H11.8 V8.5 H14.5 L10 13 L5.5 8.5 H8.2Z" fill="#5fd3c6"/><rect x="4.5" y="15" width="11" height="1.3" fill="#5fd3c6"/></svg>
<div class="t" style="left:221px;top:477px;font-size:13px;color:#cfd3d9">片头<span style="font-family:'Liberation Sans',sans-serif;font-size:12.5px;letter-spacing:0.3px">5</span></div>
<div class="a" style="left:385px;top:388px;width:144px;height:81px;background:#fff;overflow:hidden;"><div class="a" style="left:14px;top:13px;width:116px;height:2px;background:#111"></div><div class="t" style="left:13.5px;top:18.3px;font-size:17px;color:#111;font-weight:bold;font-family:'Liberation Sans',sans-serif;transform:scaleX(0.96);transform-origin:0 0;line-height:17.4px">YOUR<br>HEADLINE<br>HERE</div></div>
<div class="a" style="left:508px;top:389px;width:20px;height:20px;background:rgba(30,30,30,0.9)"></div>
<svg style="left:508px;top:389px;" width="20" height="20" viewBox="0 0 20 20"><path d="M8.2 3.5 H11.8 V8.5 H14.5 L10 13 L5.5 8.5 H8.2Z" fill="#5fd3c6"/><rect x="4.5" y="15" width="11" height="1.3" fill="#5fd3c6"/></svg>
<div class="t" style="left:385px;top:477px;font-size:13px;color:#cfd3d9">片头<span style="font-family:'Liberation Sans',sans-serif;font-size:12.5px;letter-spacing:0.3px">6</span></div>
<div class="a" style="left:549px;top:388px;width:144px;height:81px;background:#1a7ec6;overflow:hidden;"><div class="a" style="left:6px;top:5px;width:132px;height:67px;border:1px solid #5aa8dc"></div><svg style="left:0;top:0" width="144" height="81"><path d="M56 20 H68 M76 20 H88 M56 62 H68 M76 62 H88" stroke="#70b4e0" stroke-width="0.6"/><circle cx="72" cy="20" r="1.6" fill="#fff"/><circle cx="72" cy="62" r="1.6" fill="#fff"/></svg><div class="t" style="left:24px;top:34px;font-size:14px;color:#fff;font-weight:bold;font-family:'Liberation Serif',serif;transform:scaleX(1.02);transform-origin:0 0;">Your Title Here</div><div class="t" style="left:45px;top:50px;font-size:4.8px;color:#cfe6f6;font-weight:normal;font-family:'Liberation Sans',sans-serif;transform:scaleX(1.0);transform-origin:0 0;letter-spacing:0.9px">YOUR TEXT HERE</div></div>
<div class="a" style="left:672px;top:389px;width:20px;height:20px;background:rgba(10,25,40,0.9)"></div>
<svg style="left:672px;top:389px;" width="20" height="20" viewBox="0 0 20 20"><path d="M8.2 3.5 H11.8 V8.5 H14.5 L10 13 L5.5 8.5 H8.2Z" fill="#5fd3c6"/><rect x="4.5" y="15" width="11" height="1.3" fill="#5fd3c6"/></svg>
<div class="t" style="left:549px;top:477px;font-size:13px;color:#cfd3d9">片头<span style="font-family:'Liberation Sans',sans-serif;font-size:12.5px;letter-spacing:0.3px">9</span></div>
<div class="a" style="left:713px;top:388px;width:144px;height:81px;background:#fff;overflow:hidden;"><svg style="left:0;top:0" width="144" height="81"><path d="M15 52 Q30 38 70 28 Q100 18 112 22 L108 34 Q118 32 128 30 L118 44 Q90 52 60 58 Q30 64 18 60Z" fill="#3c95cf"/><path d="M30 50 Q60 38 100 32 L96 42 Q60 50 34 56Z" fill="#6cb5e0" opacity="0.7"/></svg><div class="t" style="left:34px;top:14.5px;font-size:4.5px;color:#7a8a9a;font-weight:bold;font-family:'Liberation Sans',sans-serif;transform:scaleX(1.0);transform-origin:0 0;letter-spacing:0.8px">YOUR TEXT HERE</div><div class="t" style="left:36px;top:21.5px;font-size:14.5px;color:#0e3a66;font-weight:bold;font-family:'Liberation Sans',sans-serif;transform:scaleX(0.96);transform-origin:0 0;line-height:14.2px">YOUR<br>HEADLINE<br>HERE</div></div>
<div class="a" style="left:836px;top:389px;width:20px;height:20px;background:rgba(30,30,30,0.9)"></div>
<svg style="left:836px;top:389px;" width="20" height="20" viewBox="0 0 20 20"><path d="M8.2 3.5 H11.8 V8.5 H14.5 L10 13 L5.5 8.5 H8.2Z" fill="#5fd3c6"/><rect x="4.5" y="15" width="11" height="1.3" fill="#5fd3c6"/></svg>
<div class="t" style="left:713px;top:477px;font-size:13px;color:#cfd3d9">片头<span style="font-family:'Liberation Sans',sans-serif;font-size:12.5px;letter-spacing:0.3px">10</span></div>
<div class="a" style="left:221px;top:514px;width:144px;height:40px;background:#2e2f2b;overflow:hidden;"><div class="a" style="left:5px;top:4px;width:136px;height:80px;border:1.5px solid #5c8a80"></div><svg style="left:0;top:0" width="144" height="81"><path d="M24 39 Q22 28 36 28 Q40 18 52 18 Q60 10 72 12 Q84 10 92 18 Q104 18 108 28 Q122 28 120 39 Z" fill="#8fd3c4"/><path d="M8 14 L18 6" stroke="#8fb5aa" stroke-width="1.2"/></svg><div class="t" style="left:50px;top:20px;font-size:5px;color:#4a8a7a;font-weight:bold;font-family:'Liberation Sans',sans-serif;transform:scaleX(1.0);transform-origin:0 0;letter-spacing:0.5px">YOUR TEXT HERE</div></div>
<div class="a" style="left:344px;top:515px;width:20px;height:20px;background:rgba(10,12,12,0.92)"></div>
<svg style="left:344px;top:515px;" width="20" height="20" viewBox="0 0 20 20"><path d="M8.2 3.5 H11.8 V8.5 H14.5 L10 13 L5.5 8.5 H8.2Z" fill="#5fd3c6"/><rect x="4.5" y="15" width="11" height="1.3" fill="#5fd3c6"/></svg>
<div class="a" style="left:385px;top:514px;width:144px;height:40px;background:#262420;overflow:hidden;"><div class="a" style="left:7px;top:5px;width:132px;height:80px;border:2px solid #8a7a50"></div><svg style="left:0;top:0" width="144" height="81"><path d="M38 26 Q48 20 58 26 Q64 22 72 12 Q80 22 86 26 Q96 20 106 26" fill="none" stroke="#c8b478" stroke-width="1.8"/><circle cx="72" cy="20" r="3" fill="#c8b478"/></svg><div class="t" style="left:31px;top:27px;font-size:9px;color:#f0f0ee;font-weight:normal;font-family:'Liberation Serif',serif;transform:scaleX(0.95);transform-origin:0 0;">YOUR TITLE HERE</div></div>
<div class="a" style="left:508px;top:515px;width:20px;height:20px;background:rgba(10,10,10,0.92)"></div>
<svg style="left:508px;top:515px;" width="20" height="20" viewBox="0 0 20 20"><path d="M8.2 3.5 H11.8 V8.5 H14.5 L10 13 L5.5 8.5 H8.2Z" fill="#5fd3c6"/><rect x="4.5" y="15" width="11" height="1.3" fill="#5fd3c6"/></svg>
<div class="a" style="left:549px;top:514px;width:144px;height:40px;background:#3b3530;overflow:hidden;"><svg style="left:0;top:0" width="144" height="81"><path d="M5 20 V5 H136 V81" fill="none" stroke="#8a7e6e" stroke-width="0.8"/><path d="M6 16 L16 6" stroke="#8a7e6e" stroke-width="0.8"/><path d="M60 24 H84" stroke="#b0a490" stroke-width="0.6"/></svg><div class="t" style="left:44px;top:11px;font-size:5.5px;color:#b8ac98;font-weight:normal;font-family:'Liberation Sans',sans-serif;transform:scaleX(1.0);transform-origin:0 0;letter-spacing:1.2px;transform:rotate(8deg)">YOUR TEXT HERE</div><div class="t" style="left:20px;top:32px;font-size:14px;color:#fff;font-weight:bold;font-family:'Liberation Serif',serif;transform:scaleX(0.74);transform-origin:0 0;-webkit-text-stroke:0.4px #fff">YOUR TITLE HERE</div></div>
<div class="a" style="left:672px;top:515px;width:20px;height:20px;background:rgba(10,10,10,0.92)"></div>
<svg style="left:672px;top:515px;" width="20" height="20" viewBox="0 0 20 20"><path d="M8.2 3.5 H11.8 V8.5 H14.5 L10 13 L5.5 8.5 H8.2Z" fill="#5fd3c6"/><rect x="4.5" y="15" width="11" height="1.3" fill="#5fd3c6"/></svg>
<div class="a" style="left:713px;top:514px;width:144px;height:40px;background:#66e8c9;overflow:hidden;"><div class="a" style="left:13.5px;top:31.5px;width:115px;height:30px;background:#37474f"></div><div class="a" style="left:24px;top:17.5px;width:95px;height:17px;background:#fff;transform:rotate(1.5deg)"></div><div class="t" style="left:46px;top:19.5px;font-size:12px;color:#43d6b0;font-weight:bold;font-family:'Liberation Sans',sans-serif;transform:scaleX(0.7);transform-origin:0 0;">YOUR TITLE</div></div>
<div class="a" style="left:836px;top:515px;width:20px;height:20px;background:rgba(10,30,30,0.92)"></div>
<svg style="left:836px;top:515px;" width="20" height="20" viewBox="0 0 20 20"><path d="M8.2 3.5 H11.8 V8.5 H14.5 L10 13 L5.5 8.5 H8.2Z" fill="#5fd3c6"/><rect x="4.5" y="15" width="11" height="1.3" fill="#5fd3c6"/></svg>
<div class="a" style="left:1043px;top:32px;width:796px;height:448px;background:linear-gradient(108deg,#ff4c8a 0%,#ff40a0 6%,#ff28bc 22%,#ff08e4 37%,#ff00ee 44%,#ff12d6 56%,#ff32b6 70%,#ff469c 86%,#ff6272 100%);"></div>
<div class="t" style="left:1242.5px;top:215px;font-size:82px;font-weight:bold;color:#fff;-webkit-text-stroke:0.8px #fff;transform:scaleX(0.5725);transform-origin:0 0">TITLE HERE</div>
<div class="a" style="left:1522px;top:228px;width:10px;height:61px;background:rgba(255,60,140,0.7);"></div>
<div class="t" style="left:1537px;top:223px;font-size:32.5px;color:#fff;transform:scaleX(0.582);transform-origin:0 0;line-height:33.7px">YOUR TEXT<br>HERE</div>
<svg style="left:970px;top:488px;" width="24" height="24" viewBox="0 0 24 24"><path d="M16 6 V18 L5 12Z" fill="#ccd2da"/><rect x="17.5" y="6" width="1.6" height="12" fill="#ccd2da"/></svg>
<svg style="left:1008px;top:488px;" width="24" height="24" viewBox="0 0 24 24"><rect x="4.5" y="6" width="1.6" height="12" fill="#ccd2da"/><path d="M7.5 6 V18 L18.5 12Z" fill="#ccd2da"/></svg>
<svg style="left:1045px;top:488px;" width="24" height="24" viewBox="0 0 24 24"><path d="M6 6.2 V17.8 L17.2 12Z" fill="#ccd2da"/></svg>
<div class="a" style="left:1087px;top:494px;width:12px;height:12px;background:#ccd2da;"></div>
<div class="a" style="left:1116px;top:500px;width:221px;height:2px;background:#4fd8c4;"></div>
<div class="a" style="left:1337px;top:500px;width:403px;height:2px;background:#000;"></div>
<svg style="left:1330px;top:494px;" width="14" height="14" viewBox="0 0 14 14"><circle cx="6.8" cy="7" r="5.2" fill="#4fd8c4"/></svg>
<div class="t" style="left:1765px;top:490px;font-size:13px;color:#9aa0a8;font-family:'Liberation Mono',monospace;transform:scaleX(0.75);transform-origin:0 0">{</div>
<div class="t" style="left:1784px;top:490px;font-size:13px;color:#9aa0a8;font-family:'Liberation Mono',monospace;transform:scaleX(0.75);transform-origin:0 0">}</div>
<div class="a" style="left:1812px;top:483px;width:98px;height:28px;background:#0f1216;border:1px solid #333b47"></div>
<div class="t" style="left:1817px;top:492.5px;font-size:13.6px;color:#e4e7ea;font-family:'Liberation Mono',monospace;letter-spacing:-0.2px">00:00:01:19</div>
<svg style="left:1786px;top:516px;" width="24" height="22" viewBox="0 0 24 22"><path d="M2.5 3.5 H18 V8" fill="none" stroke="#ccd2da" stroke-width="1.2"/><path d="M2.5 3.5 V14.5 H12" fill="none" stroke="#ccd2da" stroke-width="1.2"/><path d="M8 14.5 V17 M5 17.5 H11" stroke="#ccd2da" stroke-width="1.2"/><circle cx="18" cy="15" r="2.6" fill="none" stroke="#ccd2da" stroke-width="1.2"/><circle cx="18" cy="15" r="4.2" fill="none" stroke="#ccd2da" stroke-width="1.4" stroke-dasharray="1.5 1.8"/></svg>
<svg style="left:1822px;top:518px;" width="20" height="20" viewBox="0 0 20 20"><rect x="2.5" y="6" width="14.5" height="10" rx="0.8" fill="none" stroke="#ccd2da" stroke-width="1.2"/><path d="M6.5 6 L7.8 3.8 H11.7 L13 6" fill="none" stroke="#ccd2da" stroke-width="1.1"/><circle cx="9.75" cy="11" r="2.4" fill="none" stroke="#ccd2da" stroke-width="1.3"/></svg>
<svg style="left:1856px;top:517.5px;" width="20" height="20" viewBox="0 0 20 20"><path d="M2 8 H5 L10 4.5 V15.5 L5 12 H2Z" fill="#ccd2da"/><path d="M12 7.5 Q13.5 10 12 12.5 M14 5.5 Q17 10 14 14.5" fill="none" stroke="#ccd2da" stroke-width="1.1"/></svg>
<svg style="left:1891px;top:518px;" width="18" height="18" viewBox="0 0 18 18"><path d="M2.5 5.5 V2 H6 M2.5 2 L6 5.5 M15.5 5.5 V2 H12 M15.5 2 L12 5.5 M2.5 12.5 V16 H6 M2.5 16 L6 12.5 M15.5 12.5 V16 H12 M15.5 16 L12 12.5" fill="none" stroke="#ccd2da" stroke-width="1.1"/></svg>
<div class="a" style="left:0px;top:593px;width:1920px;height:1px;background:#000;"></div>
<svg style="left:24px;top:566px;" width="20" height="20" viewBox="0 0 20 20"><path d="M2.8 9.2 L8.8 3.8 V6.8 Q16.8 6.8 16.8 16.2 Q14 11.8 8.8 11.8 V14.6Z" fill="none" stroke="#cdd2d9" stroke-width="1.15" stroke-linejoin="round"/></svg>
<svg style="left:67px;top:566px;" width="20" height="20" viewBox="0 0 20 20"><path d="M17.2 9.2 L11.2 3.8 V6.8 Q3.2 6.8 3.2 16.2 Q6 11.8 11.2 11.8 V14.6Z" fill="none" stroke="#6a727d" stroke-width="1.15" stroke-linejoin="round"/></svg>
<svg style="left:112px;top:566px;" width="20" height="20" viewBox="0 0 20 20"><path d="M2.5 4.8 H15.5" stroke="#cdd2d9" stroke-width="1.3"/><path d="M7 4.8 V3 H11 V4.8" fill="none" stroke="#cdd2d9" stroke-width="1.1"/><path d="M4.6 6 V15.6 H13.4 V6" fill="none" stroke="#cdd2d9" stroke-width="1.2"/><path d="M7.2 7.5 V13.8 M9 7.5 V13.8 M10.8 7.5 V13.8" stroke="#cdd2d9" stroke-width="0.9"/></svg>
<svg style="left:155px;top:566px;" width="20" height="20" viewBox="0 0 20 20"><path d="M5 3.2 L12.3 13.5 M14.5 3.2 L7.2 13.5" stroke="#cdd2d9" stroke-width="1.6"/><ellipse cx="6.3" cy="15.3" rx="1.7" ry="1.6" fill="none" stroke="#cdd2d9" stroke-width="1.1"/><ellipse cx="13.2" cy="15.3" rx="1.7" ry="1.6" fill="none" stroke="#cdd2d9" stroke-width="1.1"/></svg>
<svg style="left:199px;top:566px;" width="20" height="20" viewBox="0 0 20 20"><circle cx="10" cy="10" r="6.8" fill="none" stroke="#cdd2d9" stroke-width="1.3"/><path d="M9.5 6 V10.8 H13" fill="none" stroke="#cdd2d9" stroke-width="1.3"/></svg>
<svg style="left:243px;top:566px;" width="20" height="20" viewBox="0 0 20 20"><path d="M4 5 H16 M4 10 H16 M4 15 H16" stroke="#cdd2d9" stroke-width="1.2"/><rect x="8" y="3.5" width="3" height="3" fill="#cdd2d9"/><rect x="5.5" y="8.5" width="3" height="3" fill="#cdd2d9"/><rect x="11" y="13.5" width="3" height="3" fill="#cdd2d9"/></svg>
<svg style="left:1554px;top:565px;" width="22" height="22" viewBox="0 0 22 22"><circle cx="11" cy="11" r="8.3" fill="none" stroke="#cdd2d9" stroke-width="1.6" stroke-dasharray="1.6 1.6"/><path d="M8.3 6.5 V15.5 L15.5 11Z" fill="#cdd2d9"/></svg>
<svg style="left:1590px;top:565px;" width="20" height="22" viewBox="0 0 20 22"><path d="M3.5 3.5 H14.5 V14 L9 18 L3.5 14Z" fill="none" stroke="#cdd2d9" stroke-width="1.3"/></svg>
<svg style="left:1623px;top:565px;" width="20" height="22" viewBox="0 0 20 22"><rect x="7" y="3" width="6" height="10" rx="3" fill="none" stroke="#cdd2d9" stroke-width="1.3"/><path d="M4.5 10 Q4.5 15.5 10 15.5 Q15.5 15.5 15.5 10 M10 15.5 V18.5 M7 19 H13" fill="none" stroke="#cdd2d9" stroke-width="1.2"/></svg>
<svg style="left:1657px;top:565px;" width="20" height="22" viewBox="0 0 20 22"><path d="M3 4.5 H13 M3 7.5 H12 M3 10.5 H11 M3 13.5 H8" stroke="#cdd2d9" stroke-width="1.1"/><path d="M15 3 V16" stroke="#cdd2d9" stroke-width="1.3"/><circle cx="12.5" cy="16" r="2.8" fill="#cdd2d9"/></svg>
<svg style="left:1690px;top:565px;" width="22" height="22" viewBox="0 0 22 22"><rect x="3" y="4.5" width="16" height="13" rx="1" fill="none" stroke="#cdd2d9" stroke-width="1.3"/><path d="M6 11 H16 M8.5 8.5 L6 11 L8.5 13.5 M13.5 8.5 L16 11 L13.5 13.5" fill="none" stroke="#cdd2d9" stroke-width="1.2"/></svg>
<svg style="left:1724px;top:565px;" width="20" height="22" viewBox="0 0 20 22"><circle cx="10" cy="11" r="6.8" fill="none" stroke="#cdd2d9" stroke-width="1.2"/><path d="M7 11 H13" stroke="#cdd2d9" stroke-width="1.2"/></svg>
<div class="a" style="left:1755px;top:575px;width:68px;height:2px;background:#7f8b98;"></div>
<div class="a" style="left:1823px;top:575px;width:18px;height:2px;background:#000;"></div>
<svg style="left:1816px;top:569px;" width="14" height="14" viewBox="0 0 14 14"><circle cx="7" cy="7" r="5" fill="#d4d8de"/></svg>
<svg style="left:1850px;top:565px;" width="20" height="22" viewBox="0 0 20 22"><circle cx="10" cy="11" r="6.8" fill="none" stroke="#cdd2d9" stroke-width="1.2"/><path d="M7 11 H13 M10 8 V14" stroke="#cdd2d9" stroke-width="1.2"/></svg>
<div class="a" style="left:1888px;top:567px;width:8px;height:18px;background:#000;border:1px solid #4a525e"></div>
<div class="a" style="left:1898px;top:567px;width:8px;height:18px;background:#000;border:1px solid #4a525e"></div>
<div class="a" style="left:0px;top:594px;width:98px;height:446px;background:#1f242c;"></div>
<div class="a" style="left:98px;top:633px;width:1px;height:362px;background:#15181e;"></div>
<div class="a" style="left:0px;top:633px;width:98px;height:1px;background:#15181e;"></div>
<div class="a" style="left:0px;top:722px;width:98px;height:1px;background:#15181e;"></div>
<div class="a" style="left:0px;top:778px;width:98px;height:1px;background:#15181e;"></div>
<svg style="left:7px;top:604px;" width="24" height="22" viewBox="0 0 24 22"><rect x="2.5" y="3.5" width="13" height="10" fill="none" stroke="#cdd2d9" stroke-width="1.2"/><rect x="6.5" y="7.5" width="13" height="10" fill="#1f242c" stroke="#cdd2d9" stroke-width="1.2"/><path d="M13 10 V15 M10.5 12.5 H15.5" stroke="#cdd2d9" stroke-width="1.1"/></svg>
<svg style="left:41px;top:604px;" width="20" height="20" viewBox="0 0 20 20"><path d="M8 11 L6 13 Q4 15 5.5 16.5 Q7 18 9 16 L11.5 13.5 M11 8 L13.5 5.5 Q15.5 3.5 17 5 Q18.5 6.5 16.5 8.5 L14 11 M9 13 L13 9" fill="none" stroke="#cdd2d9" stroke-width="1.5" stroke-linecap="round"/></svg>
<div class="a" style="left:99px;top:594px;width:1821px;height:39px;background:#1d2129;"></div>
<svg style="left:98px;top:594px;" width="1822" height="40" viewBox="0 0 1822 40"><rect x="2.0" y="26" width="1" height="10" fill="#8c96a2"/><rect x="29.3" y="32" width="1" height="4" fill="#8c96a2"/><rect x="56.7" y="32" width="1" height="4" fill="#8c96a2"/><rect x="84.0" y="32" width="1" height="4" fill="#8c96a2"/><rect x="111.4" y="32" width="1" height="4" fill="#8c96a2"/><rect x="138.7" y="26" width="1" height="10" fill="#8c96a2"/><rect x="166.1" y="32" width="1" height="4" fill="#8c96a2"/><rect x="193.4" y="32" width="1" height="4" fill="#8c96a2"/><rect x="220.8" y="32" width="1" height="4" fill="#8c96a2"/><rect x="248.1" y="32" width="1" height="4" fill="#8c96a2"/><rect x="275.4" y="26" width="1" height="10" fill="#8c96a2"/><rect x="302.8" y="32" width="1" height="4" fill="#8c96a2"/><rect x="330.1" y="32" width="1" height="4" fill="#8c96a2"/><rect x="357.5" y="32" width="1" height="4" fill="#8c96a2"/><rect x="384.8" y="32" width="1" height="4" fill="#8c96a2"/><rect x="412.2" y="26" width="1" height="10" fill="#8c96a2"/><rect x="439.5" y="32" width="1" height="4" fill="#8c96a2"/><rect x="466.8" y="32" width="1" height="4" fill="#8c96a2"/><rect x="494.2" y="32" width="1" height="4" fill="#8c96a2"/><rect x="521.5" y="32" width="1" height="4" fill="#8c96a2"/><rect x="548.9" y="26" width="1" height="10" fill="#8c96a2"/><rect x="576.2" y="32" width="1" height="4" fill="#8c96a2"/><rect x="603.6" y="32" width="1" height="4" fill="#8c96a2"/><rect x="630.9" y="32" width="1" height="4" fill="#8c96a2"/><rect x="658.3" y="32" width="1" height="4" fill="#8c96a2"/><rect x="685.6" y="26" width="1" height="10" fill="#8c96a2"/><rect x="712.9" y="32" width="1" height="4" fill="#8c96a2"/><rect x="740.3" y="32" width="1" height="4" fill="#8c96a2"/><rect x="767.6" y="32" width="1" height="4" fill="#8c96a2"/><rect x="795.0" y="32" width="1" height="4" fill="#8c96a2"/><rect x="822.3" y="26" width="1" height="10" fill="#8c96a2"/><rect x="849.7" y="32" width="1" height="4" fill="#8c96a2"/><rect x="877.0" y="32" width="1" height="4" fill="#8c96a2"/><rect x="904.4" y="32" width="1" height="4" fill="#8c96a2"/><rect x="931.7" y="32" width="1" height="4" fill="#8c96a2"/><rect x="959.0" y="26" width="1" height="10" fill="#8c96a2"/><rect x="986.4" y="32" width="1" height="4" fill="#8c96a2"/><rect x="1013.7" y="32" width="1" height="4" fill="#8c96a2"/><rect x="1041.1" y="32" width="1" height="4" fill="#8c96a2"/><rect x="1068.4" y="32" width="1" height="4" fill="#8c96a2"/><rect x="1095.8" y="26" width="1" height="10" fill="#8c96a2"/><rect x="1123.1" y="32" width="1" height="4" fill="#8c96a2"/><rect x="1150.4" y="32" width="1" height="4" fill="#8c96a2"/><rect x="1177.8" y="32" width="1" height="4" fill="#8c96a2"/><rect x="1205.1" y="32" width="1" height="4" fill="#8c96a2"/><rect x="1232.5" y="26" width="1" height="10" fill="#8c96a2"/><rect x="1259.8" y="32" width="1" height="4" fill="#8c96a2"/><rect x="1287.2" y="32" width="1" height="4" fill="#8c96a2"/><rect x="1314.5" y="32" width="1" height="4" fill="#8c96a2"/><rect x="1341.9" y="32" width="1" height="4" fill="#8c96a2"/><rect x="1369.2" y="26" width="1" height="10" fill="#8c96a2"/><rect x="1396.5" y="32" width="1" height="4" fill="#8c96a2"/><rect x="1423.9" y="32" width="1" height="4" fill="#8c96a2"/><rect x="1451.2" y="32" width="1" height="4" fill="#8c96a2"/><rect x="1478.6" y="32" width="1" height="4" fill="#8c96a2"/><rect x="1505.9" y="26" width="1" height="10" fill="#8c96a2"/><rect x="1533.3" y="32" width="1" height="4" fill="#8c96a2"/><rect x="1560.6" y="32" width="1" height="4" fill="#8c96a2"/><rect x="1588.0" y="32" width="1" height="4" fill="#8c96a2"/><rect x="1615.3" y="32" width="1" height="4" fill="#8c96a2"/><rect x="1642.6" y="26" width="1" height="10" fill="#8c96a2"/><rect x="1670.0" y="32" width="1" height="4" fill="#8c96a2"/><rect x="1697.3" y="32" width="1" height="4" fill="#8c96a2"/><rect x="1724.7" y="32" width="1" height="4" fill="#8c96a2"/><rect x="1752.0" y="32" width="1" height="4" fill="#8c96a2"/><rect x="1779.4" y="26" width="1" height="10" fill="#8c96a2"/><rect x="1806.7" y="32" width="1" height="4" fill="#8c96a2"/><rect x="1834.0" y="32" width="1" height="4" fill="#8c96a2"/><rect x="1861.4" y="32" width="1" height="4" fill="#8c96a2"/><rect x="1888.7" y="32" width="1" height="4" fill="#8c96a2"/></svg>
<div class="t" style="left:102.0px;top:608px;font-size:11px;color:#c9cdd3;letter-spacing:0.78px">00:00:00:00</div>
<div class="t" style="left:238.7px;top:608px;font-size:11px;color:#c9cdd3;letter-spacing:0.78px">00:00:01:00</div>
<div class="t" style="left:375.4px;top:608px;font-size:11px;color:#c9cdd3;letter-spacing:0.78px">00:00:02:00</div>
<div class="t" style="left:512.2px;top:608px;font-size:11px;color:#c9cdd3;letter-spacing:0.78px">00:00:03:00</div>
<div class="t" style="left:648.9px;top:608px;font-size:11px;color:#c9cdd3;letter-spacing:0.78px">00:00:04:00</div>
<div class="t" style="left:785.6px;top:608px;font-size:11px;color:#c9cdd3;letter-spacing:0.78px">00:00:05:00</div>
<div class="t" style="left:922.3px;top:608px;font-size:11px;color:#c9cdd3;letter-spacing:0.78px">00:00:06:00</div>
<div class="t" style="left:1059.0px;top:608px;font-size:11px;color:#c9cdd3;letter-spacing:0.78px">00:00:07:00</div>
<div class="t" style="left:1195.8px;top:608px;font-size:11px;color:#c9cdd3;letter-spacing:0.78px">00:00:08:00</div>
<div class="t" style="left:1332.5px;top:608px;font-size:11px;color:#c9cdd3;letter-spacing:0.78px">00:00:09:00</div>
<div class="t" style="left:1469.2px;top:608px;font-size:11px;color:#c9cdd3;letter-spacing:0.78px">00:00:10:00</div>
<div class="t" style="left:1605.9px;top:608px;font-size:11px;color:#c9cdd3;letter-spacing:0.78px">00:00:11:00</div>
<div class="t" style="left:1742.6px;top:608px;font-size:11px;color:#c9cdd3;letter-spacing:0.78px">00:00:12:00</div>
<div class="t" style="left:1879.4px;top:608px;font-size:11px;color:#c9cdd3;letter-spacing:0.78px">00:00:13:00</div>
<div class="a" style="left:1908px;top:594px;width:12px;height:40px;background:#1d2129;"></div>
<div class="a" style="left:99px;top:633px;width:1821px;height:1px;background:#15181e;"></div>
<div class="a" style="left:100px;top:632px;width:683px;height:2px;background:#ef4c44;"></div>
<div class="a" style="left:99px;top:634px;width:1821px;height:144px;background:#1d2129;"></div>
<div class="a" style="left:99px;top:778px;width:1809px;height:56px;background:#1a1e25;"></div>
<div class="a" style="left:0px;top:834px;width:98px;height:106px;background:#13161d;"></div>
<div class="a" style="left:99px;top:834px;width:1809px;height:106px;background:#12151b;"></div>
<div class="a" style="left:99px;top:940px;width:1809px;height:55px;background:#161a20;"></div>
<div class="a" style="left:0px;top:995px;width:1920px;height:45px;background:#1e232a;"></div>
<div class="a" style="left:0px;top:995px;width:98px;height:1px;background:#15181e;"></div>
<svg style="left:7px;top:798px;" width="16" height="16" viewBox="0 0 16 16"><rect x="1.5" y="1.5" width="13" height="13" fill="none" stroke="#cdd2d9" stroke-width="1.1"/><path d="M4.5 1.5 V14.5 M11.5 1.5 V14.5 M1.5 5 H4.5 M1.5 8 H4.5 M1.5 11 H4.5 M11.5 5 H14.5 M11.5 8 H14.5 M11.5 11 H14.5" stroke="#cdd2d9" stroke-width="0.9"/><path d="M6.5 6 V10 L9.5 8Z" fill="#cdd2d9"/></svg>
<div class="t" style="left:27px;top:801px;font-size:12px;color:#cdd2d9;font-family:'Liberation Mono',monospace">2</div>
<svg style="left:46px;top:798px;" width="14" height="16" viewBox="0 0 14 16"><path d="M3.8 7 V4.5 Q3.8 1.8 6.5 1.8 Q9.2 1.8 9.2 4.5" fill="none" stroke="#cdd2d9" stroke-width="1.5"/><rect x="2" y="7" width="10" height="7.5" fill="#cdd2d9"/><rect x="6" y="9.5" width="2" height="2.5" fill="#1f242c"/></svg>
<svg style="left:68px;top:799px;" width="18" height="14" viewBox="0 0 18 14"><path d="M1 7 Q8.5 -1 16 7 Q8.5 15 1 7Z" fill="#cdd2d9"/><circle cx="8.5" cy="7" r="3" fill="#1f242c"/><circle cx="8.5" cy="7" r="1.6" fill="#cdd2d9"/></svg>
<svg style="left:7px;top:879px;" width="16" height="16" viewBox="0 0 16 16"><rect x="1.5" y="1.5" width="13" height="13" fill="none" stroke="#cdd2d9" stroke-width="1.1"/><path d="M4.5 1.5 V14.5 M11.5 1.5 V14.5 M1.5 5 H4.5 M1.5 8 H4.5 M1.5 11 H4.5 M11.5 5 H14.5 M11.5 8 H14.5 M11.5 11 H14.5" stroke="#cdd2d9" stroke-width="0.9"/><path d="M6.5 6 V10 L9.5 8Z" fill="#cdd2d9"/></svg>
<div class="t" style="left:27px;top:882px;font-size:12px;color:#cdd2d9;font-family:'Liberation Mono',monospace">1</div>
<svg style="left:46px;top:879px;" width="14" height="16" viewBox="0 0 14 16"><path d="M3.8 7 V4.5 Q3.8 1.8 6.5 1.8 Q9.2 1.8 9.2 4.5" fill="none" stroke="#cdd2d9" stroke-width="1.5"/><rect x="2" y="7" width="10" height="7.5" fill="#cdd2d9"/><rect x="6" y="9.5" width="2" height="2.5" fill="#1f242c"/></svg>
<svg style="left:68px;top:880px;" width="18" height="14" viewBox="0 0 18 14"><path d="M1 7 Q8.5 -1 16 7 Q8.5 15 1 7Z" fill="#cdd2d9"/><circle cx="8.5" cy="7" r="3" fill="#1f242c"/><circle cx="8.5" cy="7" r="1.6" fill="#cdd2d9"/></svg>
<svg style="left:7px;top:960px;" width="16" height="18" viewBox="0 0 16 18"><path d="M6 14 V3 L13 1.5 V12" fill="none" stroke="#cdd2d9" stroke-width="1.1"/><path d="M6 6 L13 4.5" stroke="#cdd2d9" stroke-width="1"/><ellipse cx="4.3" cy="14.3" rx="2.2" ry="1.8" fill="#cdd2d9"/><ellipse cx="11.3" cy="12.3" rx="2.2" ry="1.8" fill="#cdd2d9"/></svg>
<div class="t" style="left:27px;top:963px;font-size:12px;color:#cdd2d9;font-family:'Liberation Mono',monospace">1</div>
<svg style="left:46px;top:960px;" width="14" height="16" viewBox="0 0 14 16"><path d="M3.8 7 V4.5 Q3.8 1.8 6.5 1.8 Q9.2 1.8 9.2 4.5" fill="none" stroke="#cdd2d9" stroke-width="1.5"/><rect x="2" y="7" width="10" height="7.5" fill="#cdd2d9"/><rect x="6" y="9.5" width="2" height="2.5" fill="#1f242c"/></svg>
<svg style="left:68px;top:960px;" width="18" height="16" viewBox="0 0 18 16"><path d="M1.5 5.5 H4.5 L9 2 V14 L4.5 10.5 H1.5Z" fill="#cdd2d9"/><path d="M11 5 Q12.8 8 11 11 M13 3 Q16 8 13 13" fill="none" stroke="#cdd2d9" stroke-width="1.1"/></svg>
<div class="a" style="left:100px;top:778px;width:683px;height:55px;background:#6f5ba5;border:2px solid #c8b4f4"></div>
<div class="a" style="left:103px;top:781px;width:12px;height:14px;background:#d2d5da;"></div>
<div class="t" style="left:104.3px;top:780.8px;font-size:15px;color:#2a3038;font-weight:bold;font-family:'Liberation Serif',serif">T</div>
<div class="t" style="left:121px;top:783px;font-size:12px;color:#f8f8fa;text-shadow:1px 1px 0 rgba(0,0,0,0.75)">片头<span style="font-family:'Liberation Sans',sans-serif;font-size:11.5px">3</span></div>
<div class="a" style="left:100px;top:835px;width:683px;height:104px;overflow:hidden;border:1px solid #e89c3c"><div class="a" style="left:-1px;top:-1px;width:683px;height:104px"><svg width="154" height="103" viewBox="0 0 154 103" style="position:absolute;left:0px;top:0"><defs><linearGradient id="fd0" x1="0" y1="0" x2="1" y2="0"><stop offset="0" stop-color="#c08c40"/><stop offset="0.28" stop-color="#806030"/><stop offset="0.5" stop-color="#474224"/><stop offset="1" stop-color="#2a2c1c"/></linearGradient><linearGradient id="fv0" x1="0" y1="0" x2="0" y2="1"><stop offset="0" stop-color="#fff" stop-opacity="0.2"/><stop offset="0.25" stop-color="#000" stop-opacity="0"/><stop offset="1" stop-color="#100c04" stop-opacity="0.7"/></linearGradient><radialGradient id="gl0" cx="0" cy="0.1" r="0.8"><stop offset="0" stop-color="#fff6d8"/><stop offset="0.25" stop-color="#ffd080" stop-opacity="0.8"/><stop offset="1" stop-color="#e0a040" stop-opacity="0"/></radialGradient><pattern id="pl0" width="6" height="6" patternUnits="userSpaceOnUse"><rect width="6" height="6" fill="#b01826"/><rect x="0" y="0" width="3" height="3" fill="#f0e4e4"/><rect x="3" y="3" width="3" height="3" fill="#2a0a0e"/></pattern></defs><rect width="154" height="103" fill="#fffefa"/><path d="M0 30 Q60 29 100 32 Q130 33 154 31 V103 H0Z" fill="url(#fd0)"/><path d="M0 31 V103 H154 V31Z" fill="url(#fv0)"/><path d="M0 27 Q45 26 90 29 V60 H0Z" fill="url(#gl0)"/><path d="M128 32 L130 24 Q138 21 146 23 L154 22 V33Z" fill="#3e3a24"/><path d="M110 38 Q138 48 134 70 Q130 82 118 80" fill="none" stroke="#d06a30" stroke-width="0.8" opacity="0.5"/><rect x="32" y="24" width="8" height="3" fill="#c8a8a0" opacity="0.8"/><path d="M40 103 L42 68 Q46 61 58 57 L66 55 L73 66 L80 55 L88 57 Q100 61 104 68 L108 103Z" fill="url(#pl0)"/><path d="M40 103 L42 68 Q46 61 58 57 L66 55 L73 66 L80 55 L88 57 Q100 61 104 68 L108 103Z" fill="#8a1420" opacity="0.3"/><path d="M56 28 Q52 46 55 60 L64 62 Q62 46 65 34Z" fill="#3a1c0e"/><path d="M90 28 Q94 46 91 60 L82 62 Q84 46 81 34Z" fill="#3a1c0e"/><path d="M66 48 L80 48 L80 56 L73 66 L66 56Z" fill="#dca47e"/><ellipse cx="73" cy="38.5" rx="10" ry="12.5" fill="#eabb9c"/><path d="M67 42.5 Q73 47.5 79 42.5 Q73 49 67 42.5Z" fill="#d02838"/><path d="M62 30 Q73 22 84 30 L83 35 Q78 30 73 31 Q68 30 63 35Z" fill="#3a1c0e"/><path d="M53 38 Q52 28 58 25 Q60 14 73 13 Q86 14 88 25 Q94 28 93 38 Q88 29 73 27 Q58 29 53 38Z" fill="#4e2c1a"/></svg><svg width="154" height="103" viewBox="0 0 154 103" style="position:absolute;left:154px;top:0"><defs><linearGradient id="fd1" x1="0" y1="0" x2="1" y2="0"><stop offset="0" stop-color="#c08c40"/><stop offset="0.28" stop-color="#806030"/><stop offset="0.5" stop-color="#474224"/><stop offset="1" stop-color="#2a2c1c"/></linearGradient><linearGradient id="fv1" x1="0" y1="0" x2="0" y2="1"><stop offset="0" stop-color="#fff" stop-opacity="0.2"/><stop offset="0.25" stop-color="#000" stop-opacity="0"/><stop offset="1" stop-color="#100c04" stop-opacity="0.7"/></linearGradient><radialGradient id="gl1" cx="0" cy="0.1" r="0.8"><stop offset="0" stop-color="#fff6d8"/><stop offset="0.25" stop-color="#ffd080" stop-opacity="0.8"/><stop offset="1" stop-color="#e0a040" stop-opacity="0"/></radialGradient><pattern id="pl1" width="6" height="6" patternUnits="userSpaceOnUse"><rect width="6" height="6" fill="#b01826"/><rect x="0" y="0" width="3" height="3" fill="#f0e4e4"/><rect x="3" y="3" width="3" height="3" fill="#2a0a0e"/></pattern></defs><rect width="154" height="103" fill="#fffefa"/><path d="M0 30 Q60 29 100 32 Q130 33 154 31 V103 H0Z" fill="url(#fd1)"/><path d="M0 31 V103 H154 V31Z" fill="url(#fv1)"/><path d="M0 27 Q45 26 90 29 V60 H0Z" fill="url(#gl1)"/><path d="M128 32 L130 24 Q138 21 146 23 L154 22 V33Z" fill="#3e3a24"/><path d="M110 38 Q138 48 134 70 Q130 82 118 80" fill="none" stroke="#d06a30" stroke-width="0.8" opacity="0.5"/><rect x="32" y="24" width="8" height="3" fill="#c8a8a0" opacity="0.8"/><path d="M40 103 L42 68 Q46 61 58 57 L66 55 L73 66 L80 55 L88 57 Q100 61 104 68 L108 103Z" fill="url(#pl1)"/><path d="M40 103 L42 68 Q46 61 58 57 L66 55 L73 66 L80 55 L88 57 Q100 61 104 68 L108 103Z" fill="#8a1420" opacity="0.3"/><path d="M56 28 Q52 46 55 60 L64 62 Q62 46 65 34Z" fill="#3a1c0e"/><path d="M90 28 Q94 46 91 60 L82 62 Q84 46 81 34Z" fill="#3a1c0e"/><path d="M66 48 L80 48 L80 56 L73 66 L66 56Z" fill="#dca47e"/><ellipse cx="73" cy="38.5" rx="10" ry="12.5" fill="#eabb9c"/><path d="M67 42.5 Q73 47.5 79 42.5 Q73 49 67 42.5Z" fill="#d02838"/><path d="M62 30 Q73 22 84 30 L83 35 Q78 30 73 31 Q68 30 63 35Z" fill="#3a1c0e"/><path d="M53 38 Q52 28 58 25 Q60 14 73 13 Q86 14 88 25 Q94 28 93 38 Q88 29 73 27 Q58 29 53 38Z" fill="#4e2c1a"/></svg><svg width="154" height="103" viewBox="0 0 154 103" style="position:absolute;left:308px;top:0"><defs><linearGradient id="fd2" x1="0" y1="0" x2="1" y2="0"><stop offset="0" stop-color="#c08c40"/><stop offset="0.28" stop-color="#806030"/><stop offset="0.5" stop-color="#474224"/><stop offset="1" stop-color="#2a2c1c"/></linearGradient><linearGradient id="fv2" x1="0" y1="0" x2="0" y2="1"><stop offset="0" stop-color="#fff" stop-opacity="0.2"/><stop offset="0.25" stop-color="#000" stop-opacity="0"/><stop offset="1" stop-color="#100c04" stop-opacity="0.7"/></linearGradient><radialGradient id="gl2" cx="0" cy="0.1" r="0.8"><stop offset="0" stop-color="#fff6d8"/><stop offset="0.25" stop-color="#ffd080" stop-opacity="0.8"/><stop offset="1" stop-color="#e0a040" stop-opacity="0"/></radialGradient><pattern id="pl2" width="6" height="6" patternUnits="userSpaceOnUse"><rect width="6" height="6" fill="#b01826"/><rect x="0" y="0" width="3" height="3" fill="#f0e4e4"/><rect x="3" y="3" width="3" height="3" fill="#2a0a0e"/></pattern></defs><rect width="154" height="103" fill="#fffefa"/><path d="M0 30 Q60 29 100 32 Q130 33 154 31 V103 H0Z" fill="url(#fd2)"/><path d="M0 31 V103 H154 V31Z" fill="url(#fv2)"/><path d="M0 27 Q45 26 90 29 V60 H0Z" fill="url(#gl2)"/><path d="M128 32 L130 24 Q138 21 146 23 L154 22 V33Z" fill="#3e3a24"/><path d="M110 38 Q138 48 134 70 Q130 82 118 80" fill="none" stroke="#d06a30" stroke-width="0.8" opacity="0.5"/><rect x="32" y="24" width="8" height="3" fill="#c8a8a0" opacity="0.8"/><path d="M40 103 L42 68 Q46 61 58 57 L66 55 L73 66 L80 55 L88 57 Q100 61 104 68 L108 103Z" fill="url(#pl2)"/><path d="M40 103 L42 68 Q46 61 58 57 L66 55 L73 66 L80 55 L88 57 Q100 61 104 68 L108 103Z" fill="#8a1420" opacity="0.3"/><path d="M56 28 Q52 46 55 60 L64 62 Q62 46 65 34Z" fill="#3a1c0e"/><path d="M90 28 Q94 46 91 60 L82 62 Q84 46 81 34Z" fill="#3a1c0e"/><path d="M66 48 L80 48 L80 56 L73 66 L66 56Z" fill="#dca47e"/><ellipse cx="73" cy="38.5" rx="10" ry="12.5" fill="#eabb9c"/><path d="M67 42.5 Q73 47.5 79 42.5 Q73 49 67 42.5Z" fill="#d02838"/><path d="M62 30 Q73 22 84 30 L83 35 Q78 30 73 31 Q68 30 63 35Z" fill="#3a1c0e"/><path d="M53 38 Q52 28 58 25 Q60 14 73 13 Q86 14 88 25 Q94 28 93 38 Q88 29 73 27 Q58 29 53 38Z" fill="#4e2c1a"/></svg><svg width="154" height="103" viewBox="0 0 154 103" style="position:absolute;left:462px;top:0"><defs><linearGradient id="fd3" x1="0" y1="0" x2="1" y2="0"><stop offset="0" stop-color="#c08c40"/><stop offset="0.28" stop-color="#806030"/><stop offset="0.5" stop-color="#474224"/><stop offset="1" stop-color="#2a2c1c"/></linearGradient><linearGradient id="fv3" x1="0" y1="0" x2="0" y2="1"><stop offset="0" stop-color="#fff" stop-opacity="0.2"/><stop offset="0.25" stop-color="#000" stop-opacity="0"/><stop offset="1" stop-color="#100c04" stop-opacity="0.7"/></linearGradient><radialGradient id="gl3" cx="0" cy="0.1" r="0.8"><stop offset="0" stop-color="#fff6d8"/><stop offset="0.25" stop-color="#ffd080" stop-opacity="0.8"/><stop offset="1" stop-color="#e0a040" stop-opacity="0"/></radialGradient><pattern id="pl3" width="6" height="6" patternUnits="userSpaceOnUse"><rect width="6" height="6" fill="#b01826"/><rect x="0" y="0" width="3" height="3" fill="#f0e4e4"/><rect x="3" y="3" width="3" height="3" fill="#2a0a0e"/></pattern></defs><rect width="154" height="103" fill="#fffefa"/><path d="M0 30 Q60 29 100 32 Q130 33 154 31 V103 H0Z" fill="url(#fd3)"/><path d="M0 31 V103 H154 V31Z" fill="url(#fv3)"/><path d="M0 27 Q45 26 90 29 V60 H0Z" fill="url(#gl3)"/><path d="M128 32 L130 24 Q138 21 146 23 L154 22 V33Z" fill="#3e3a24"/><path d="M110 38 Q138 48 134 70 Q130 82 118 80" fill="none" stroke="#d06a30" stroke-width="0.8" opacity="0.5"/><rect x="32" y="24" width="8" height="3" fill="#c8a8a0" opacity="0.8"/><path d="M40 103 L42 68 Q46 61 58 57 L66 55 L73 66 L80 55 L88 57 Q100 61 104 68 L108 103Z" fill="url(#pl3)"/><path d="M40 103 L42 68 Q46 61 58 57 L66 55 L73 66 L80 55 L88 57 Q100 61 104 68 L108 103Z" fill="#8a1420" opacity="0.3"/><path d="M56 28 Q52 46 55 60 L64 62 Q62 46 65 34Z" fill="#3a1c0e"/><path d="M90 28 Q94 46 91 60 L82 62 Q84 46 81 34Z" fill="#3a1c0e"/><path d="M66 48 L80 48 L80 56 L73 66 L66 56Z" fill="#dca47e"/><ellipse cx="73" cy="38.5" rx="10" ry="12.5" fill="#eabb9c"/><path d="M67 42.5 Q73 47.5 79 42.5 Q73 49 67 42.5Z" fill="#d02838"/><path d="M62 30 Q73 22 84 30 L83 35 Q78 30 73 31 Q68 30 63 35Z" fill="#3a1c0e"/><path d="M53 38 Q52 28 58 25 Q60 14 73 13 Q86 14 88 25 Q94 28 93 38 Q88 29 73 27 Q58 29 53 38Z" fill="#4e2c1a"/></svg><svg width="154" height="103" viewBox="0 0 154 103" style="position:absolute;left:616px;top:0"><defs><linearGradient id="fd4" x1="0" y1="0" x2="1" y2="0"><stop offset="0" stop-color="#c08c40"/><stop offset="0.28" stop-color="#806030"/><stop offset="0.5" stop-color="#474224"/><stop offset="1" stop-color="#2a2c1c"/></linearGradient><linearGradient id="fv4" x1="0" y1="0" x2="0" y2="1"><stop offset="0" stop-color="#fff" stop-opacity="0.2"/><stop offset="0.25" stop-color="#000" stop-opacity="0"/><stop offset="1" stop-color="#100c04" stop-opacity="0.7"/></linearGradient><radialGradient id="gl4" cx="0" cy="0.1" r="0.8"><stop offset="0" stop-color="#fff6d8"/><stop offset="0.25" stop-color="#ffd080" stop-opacity="0.8"/><stop offset="1" stop-color="#e0a040" stop-opacity="0"/></radialGradient><pattern id="pl4" width="6" height="6" patternUnits="userSpaceOnUse"><rect width="6" height="6" fill="#b01826"/><rect x="0" y="0" width="3" height="3" fill="#f0e4e4"/><rect x="3" y="3" width="3" height="3" fill="#2a0a0e"/></pattern></defs><rect width="154" height="103" fill="#fffefa"/><path d="M0 30 Q60 29 100 32 Q130 33 154 31 V103 H0Z" fill="url(#fd4)"/><path d="M0 31 V103 H154 V31Z" fill="url(#fv4)"/><path d="M0 27 Q45 26 90 29 V60 H0Z" fill="url(#gl4)"/><path d="M128 32 L130 24 Q138 21 146 23 L154 22 V33Z" fill="#3e3a24"/><path d="M110 38 Q138 48 134 70 Q130 82 118 80" fill="none" stroke="#d06a30" stroke-width="0.8" opacity="0.5"/><rect x="32" y="24" width="8" height="3" fill="#c8a8a0" opacity="0.8"/><path d="M40 103 L42 68 Q46 61 58 57 L66 55 L73 66 L80 55 L88 57 Q100 61 104 68 L108 103Z" fill="url(#pl4)"/><path d="M40 103 L42 68 Q46 61 58 57 L66 55 L73 66 L80 55 L88 57 Q100 61 104 68 L108 103Z" fill="#8a1420" opacity="0.3"/><path d="M56 28 Q52 46 55 60 L64 62 Q62 46 65 34Z" fill="#3a1c0e"/><path d="M90 28 Q94 46 91 60 L82 62 Q84 46 81 34Z" fill="#3a1c0e"/><path d="M66 48 L80 48 L80 56 L73 66 L66 56Z" fill="#dca47e"/><ellipse cx="73" cy="38.5" rx="10" ry="12.5" fill="#eabb9c"/><path d="M67 42.5 Q73 47.5 79 42.5 Q73 49 67 42.5Z" fill="#d02838"/><path d="M62 30 Q73 22 84 30 L83 35 Q78 30 73 31 Q68 30 63 35Z" fill="#3a1c0e"/><path d="M53 38 Q52 28 58 25 Q60 14 73 13 Q86 14 88 25 Q94 28 93 38 Q88 29 73 27 Q58 29 53 38Z" fill="#4e2c1a"/></svg></div></div>
<div class="t" style="left:106px;top:841px;font-size:10.2px;color:#111;font-family:'Liberation Mono',monospace;letter-spacing:-0.15px;text-shadow:0 1px 0 rgba(255,255,255,0.6)">allef-vinicius-8yp0mTNK2FA-unsplash</div>
<div class="a" style="left:99px;top:1025px;width:1809px;height:15px;background:#1b1f25;"></div>
<div class="a" style="left:101px;top:1027px;width:1309px;height:10px;background:#55667a;border-radius:3px"></div>
<div class="a" style="left:329px;top:606px;width:1px;height:420px;background:#ef4c44;"></div>
<svg style="left:321px;top:594px;" width="16" height="17" viewBox="0 0 16 17"><path d="M1 1 H15 V10 L8 16 L1 10Z" fill="#ef4c44"/></svg>
<div class="a" style="left:319px;top:706px;width:21px;height:38px;background:#f4524a;border-radius:10px"></div>
<svg style="left:319px;top:714px;" width="21" height="22" viewBox="0 0 21 22"><path d="M6 4 L14.5 14 M15 4 L6.5 14" stroke="#fff" stroke-width="1.3"/><circle cx="7" cy="16" r="2.2" fill="none" stroke="#fff" stroke-width="1.1"/><circle cx="14" cy="16" r="2.2" fill="none" stroke="#fff" stroke-width="1.1"/></svg>
<svg style="left:0px;top:0px;pointer-events:none" width="1920" height="1040" viewBox="0 0 1920 1040"><path d="M626.5 232 L416.5 757" stroke="#e8473e" stroke-width="3.3" stroke-linecap="round"/><path d="M410.3 756 L421.6 761 L411.2 769.8Z" fill="#e8473e" stroke="#e8473e" stroke-width="1.2" stroke-linejoin="round"/></svg>
</body></html>
